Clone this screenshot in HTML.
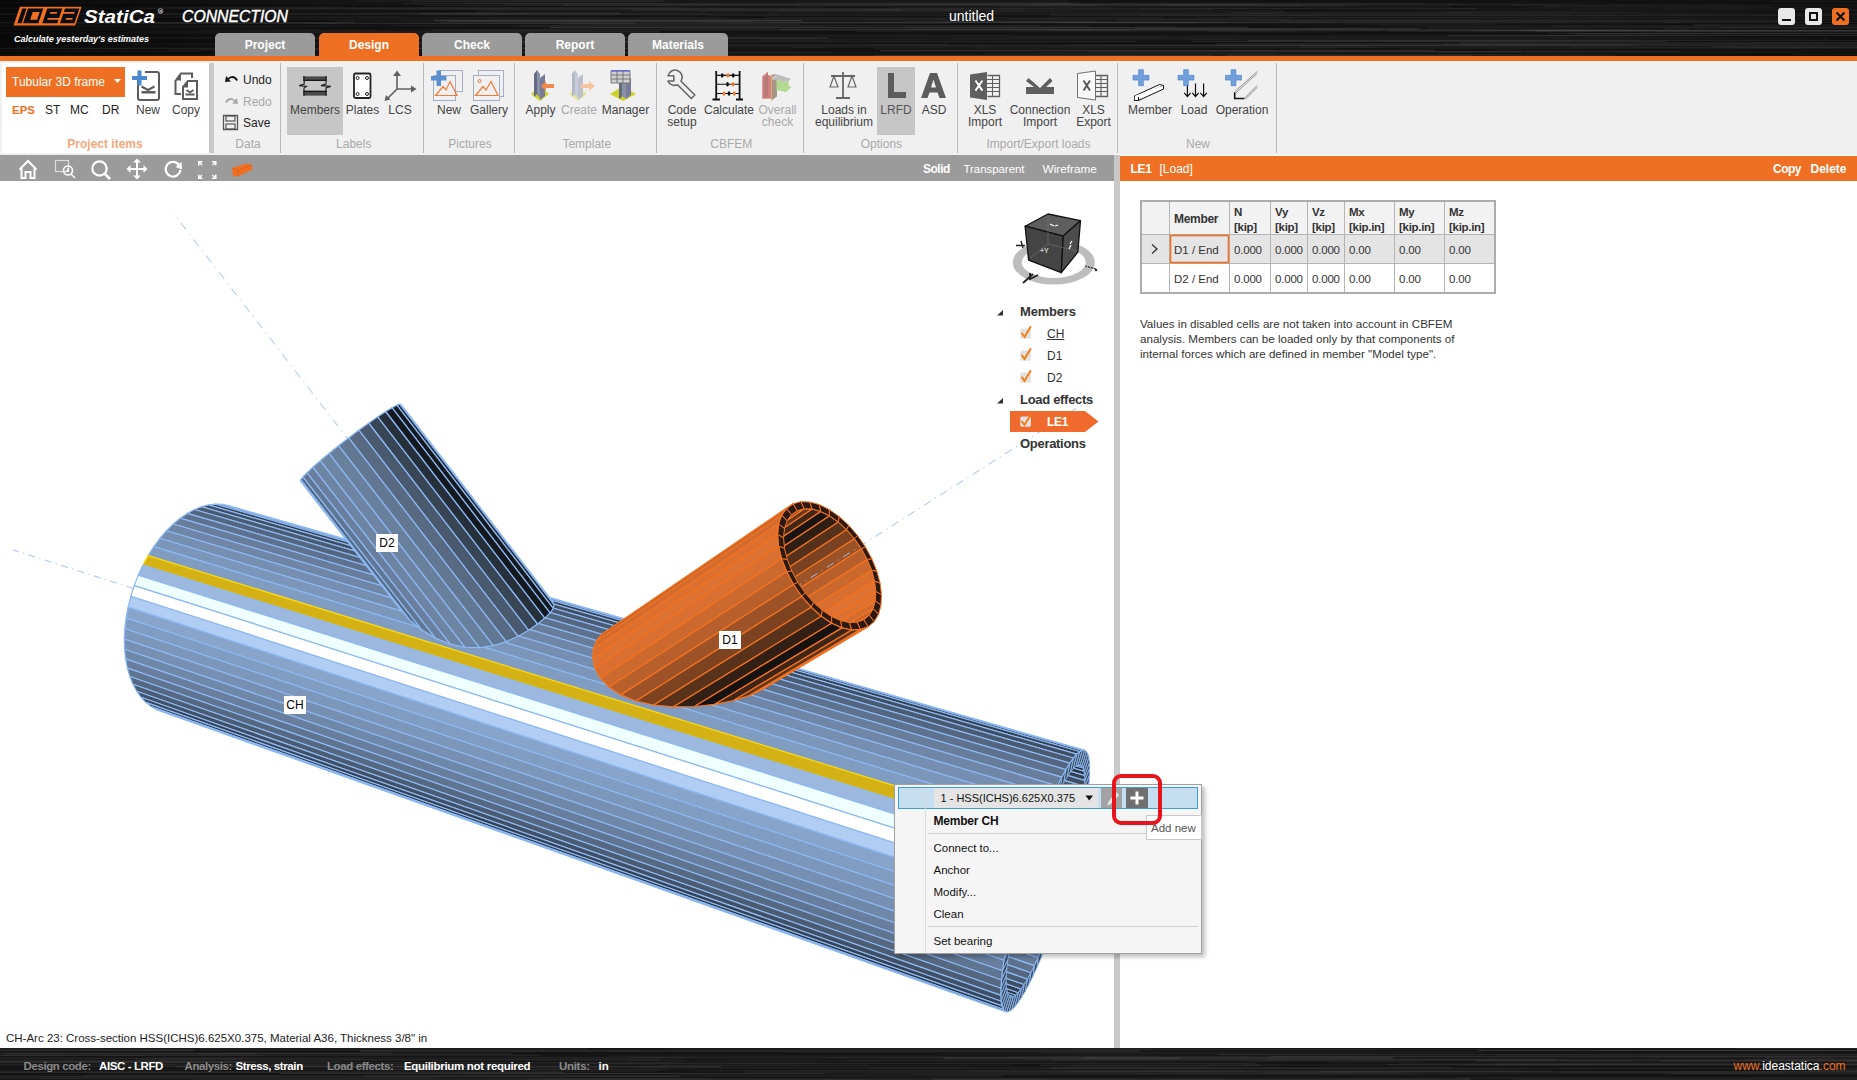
<!DOCTYPE html>
<html><head><meta charset="utf-8">
<style>
*{margin:0;padding:0;box-sizing:border-box}
html,body{width:1857px;height:1080px;overflow:hidden;background:#fff;font-family:"Liberation Sans",sans-serif;position:relative}
.a{position:absolute;white-space:nowrap}
.brushed{background-color:#141414;background-image:repeating-linear-gradient(180deg,rgba(255,255,255,0.05) 0px,rgba(255,255,255,0.0) 1px,rgba(0,0,0,0.2) 2px,rgba(255,255,255,0.07) 3px,rgba(0,0,0,0.1) 5px)}
.tab{position:absolute;top:33px;width:100px;height:23px;background:#9b9b9b;border-radius:5px 5px 0 0;color:#fff;font-weight:bold;font-size:12px;text-align:center;line-height:24px}
.sep{position:absolute;top:63px;width:1px;height:90px;background:#b9b9b9}
.lbl{position:absolute;font-size:12px;color:#333;text-align:center;line-height:12px}
.glbl{position:absolute;top:137px;font-size:12px;color:#a9a9a9;text-align:center}
.dis{color:#a0a0a0}
</style></head><body>
<!-- TITLE BAR -->
<div class="a" style="left:0;top:0;width:1857px;height:56px;background:#121212"></div><svg class="a" style="left:0;top:0" width="1857" height="56"><path d="M1528 7.5h723" stroke="rgb(71,71,71)" stroke-opacity="0.14" stroke-width="1.2"/><path d="M519 26.4h307" stroke="rgb(86,86,86)" stroke-opacity="0.11" stroke-width="1.2"/><path d="M1344 24.2h152" stroke="rgb(83,83,83)" stroke-opacity="0.18" stroke-width="0.8"/><path d="M-79 33.1h388" stroke="rgb(56,56,56)" stroke-opacity="0.11" stroke-width="0.6"/><path d="M522 52.6h312" stroke="rgb(82,82,82)" stroke-opacity="0.31" stroke-width="0.8"/><path d="M1726 42.8h565" stroke="rgb(77,77,77)" stroke-opacity="0.17" stroke-width="0.8"/><path d="M1754 42.6h845" stroke="rgb(81,81,81)" stroke-opacity="0.34" stroke-width="0.6"/><path d="M1841 10.4h795" stroke="rgb(62,62,62)" stroke-opacity="0.32" stroke-width="1.2"/><path d="M1663 28.4h292" stroke="rgb(73,73,73)" stroke-opacity="0.27" stroke-width="1.2"/><path d="M790 47.4h592" stroke="rgb(57,57,57)" stroke-opacity="0.24" stroke-width="1.2"/><path d="M73 23.2h562" stroke="rgb(99,99,99)" stroke-opacity="0.32" stroke-width="1"/><path d="M1132 4.8h231" stroke="rgb(65,65,65)" stroke-opacity="0.25" stroke-width="1.2"/><path d="M1281 20.7h502" stroke="rgb(74,74,74)" stroke-opacity="0.30" stroke-width="1.2"/><path d="M64 36.2h320" stroke="rgb(55,55,55)" stroke-opacity="0.32" stroke-width="0.8"/><path d="M442 22.6h786" stroke="rgb(77,77,77)" stroke-opacity="0.23" stroke-width="1"/><path d="M1013 36.9h697" stroke="rgb(79,79,79)" stroke-opacity="0.32" stroke-width="0.8"/><path d="M911 29.0h470" stroke="rgb(58,58,58)" stroke-opacity="0.24" stroke-width="1"/><path d="M131 31.9h529" stroke="rgb(86,86,86)" stroke-opacity="0.34" stroke-width="1.2"/><path d="M861 19.4h618" stroke="rgb(94,94,94)" stroke-opacity="0.20" stroke-width="0.6"/><path d="M1070 45.1h563" stroke="rgb(66,66,66)" stroke-opacity="0.34" stroke-width="1"/><path d="M1735 1.8h203" stroke="rgb(110,110,110)" stroke-opacity="0.11" stroke-width="0.6"/><path d="M307 42.2h351" stroke="rgb(106,106,106)" stroke-opacity="0.28" stroke-width="1"/><path d="M61 16.3h341" stroke="rgb(65,65,65)" stroke-opacity="0.29" stroke-width="1"/><path d="M395 25.5h505" stroke="rgb(56,56,56)" stroke-opacity="0.19" stroke-width="1"/><path d="M106 23.6h232" stroke="rgb(101,101,101)" stroke-opacity="0.24" stroke-width="0.8"/><path d="M631 54.1h882" stroke="rgb(69,69,69)" stroke-opacity="0.11" stroke-width="0.8"/><path d="M1770 2.0h484" stroke="rgb(87,87,87)" stroke-opacity="0.29" stroke-width="0.8"/><path d="M1061 54.7h671" stroke="rgb(83,83,83)" stroke-opacity="0.17" stroke-width="0.6"/><path d="M942 22.1h391" stroke="rgb(95,95,95)" stroke-opacity="0.22" stroke-width="1"/><path d="M158 7.0h186" stroke="rgb(59,59,59)" stroke-opacity="0.34" stroke-width="1"/><path d="M343 51.4h269" stroke="rgb(91,91,91)" stroke-opacity="0.17" stroke-width="0.6"/><path d="M1535 31.4h593" stroke="rgb(68,68,68)" stroke-opacity="0.37" stroke-width="1.2"/><path d="M1572 9.6h880" stroke="rgb(100,100,100)" stroke-opacity="0.28" stroke-width="0.6"/><path d="M448 21.2h304" stroke="rgb(98,98,98)" stroke-opacity="0.36" stroke-width="0.8"/><path d="M1723 27.6h443" stroke="rgb(87,87,87)" stroke-opacity="0.24" stroke-width="1"/><path d="M568 34.3h361" stroke="rgb(65,65,65)" stroke-opacity="0.16" stroke-width="1"/><path d="M915 45.4h251" stroke="rgb(82,82,82)" stroke-opacity="0.17" stroke-width="0.6"/><path d="M1711 46.9h408" stroke="rgb(108,108,108)" stroke-opacity="0.29" stroke-width="1.2"/><path d="M849 43.0h199" stroke="rgb(57,57,57)" stroke-opacity="0.13" stroke-width="0.8"/><path d="M861 9.3h351" stroke="rgb(76,76,76)" stroke-opacity="0.27" stroke-width="1"/><path d="M434 20.6h368" stroke="rgb(110,110,110)" stroke-opacity="0.37" stroke-width="1.2"/><path d="M889 7.6h228" stroke="rgb(57,57,57)" stroke-opacity="0.22" stroke-width="1.2"/><path d="M1400 48.5h771" stroke="rgb(76,76,76)" stroke-opacity="0.14" stroke-width="1.2"/><path d="M887 4.3h574" stroke="rgb(72,72,72)" stroke-opacity="0.21" stroke-width="1"/><path d="M1695 31.6h493" stroke="rgb(72,72,72)" stroke-opacity="0.13" stroke-width="0.6"/><path d="M-273 46.4h653" stroke="rgb(60,60,60)" stroke-opacity="0.22" stroke-width="0.6"/><path d="M1394 10.5h590" stroke="rgb(65,65,65)" stroke-opacity="0.14" stroke-width="0.8"/><path d="M43 38.1h784" stroke="rgb(82,82,82)" stroke-opacity="0.36" stroke-width="1.2"/><path d="M871 45.2h764" stroke="rgb(90,90,90)" stroke-opacity="0.17" stroke-width="1.2"/><path d="M148 17.6h388" stroke="rgb(56,56,56)" stroke-opacity="0.10" stroke-width="1"/><path d="M391 40.7h443" stroke="rgb(80,80,80)" stroke-opacity="0.13" stroke-width="1"/><path d="M1792 54.3h234" stroke="rgb(68,68,68)" stroke-opacity="0.32" stroke-width="1.2"/><path d="M259 37.1h556" stroke="rgb(74,74,74)" stroke-opacity="0.16" stroke-width="1"/><path d="M306 4.6h888" stroke="rgb(83,83,83)" stroke-opacity="0.13" stroke-width="1"/><path d="M542 52.7h380" stroke="rgb(75,75,75)" stroke-opacity="0.15" stroke-width="1"/><path d="M-82 13.8h609" stroke="rgb(106,106,106)" stroke-opacity="0.27" stroke-width="0.8"/><path d="M1443 12.3h451" stroke="rgb(72,72,72)" stroke-opacity="0.26" stroke-width="0.6"/><path d="M-254 40.8h157" stroke="rgb(103,103,103)" stroke-opacity="0.33" stroke-width="1.2"/><path d="M1553 26.3h226" stroke="rgb(104,104,104)" stroke-opacity="0.33" stroke-width="0.6"/><path d="M1135 28.5h285" stroke="rgb(64,64,64)" stroke-opacity="0.38" stroke-width="1"/><path d="M1230 17.1h776" stroke="rgb(93,93,93)" stroke-opacity="0.19" stroke-width="0.8"/><path d="M1664 7.9h174" stroke="rgb(75,75,75)" stroke-opacity="0.34" stroke-width="0.8"/><path d="M633 10.0h268" stroke="rgb(100,100,100)" stroke-opacity="0.34" stroke-width="0.8"/><path d="M-161 14.1h873" stroke="rgb(106,106,106)" stroke-opacity="0.22" stroke-width="1"/><path d="M1536 30.3h490" stroke="rgb(80,80,80)" stroke-opacity="0.34" stroke-width="0.8"/><path d="M-247 14.4h635" stroke="rgb(81,81,81)" stroke-opacity="0.38" stroke-width="0.6"/><path d="M466 3.5h254" stroke="rgb(63,63,63)" stroke-opacity="0.15" stroke-width="1"/><path d="M565 22.3h609" stroke="rgb(69,69,69)" stroke-opacity="0.24" stroke-width="0.8"/><path d="M780 29.6h637" stroke="rgb(83,83,83)" stroke-opacity="0.36" stroke-width="0.8"/><path d="M768 13.3h509" stroke="rgb(69,69,69)" stroke-opacity="0.31" stroke-width="1"/><path d="M1656 31.4h838" stroke="rgb(72,72,72)" stroke-opacity="0.38" stroke-width="0.8"/><path d="M-146 2.7h534" stroke="rgb(78,78,78)" stroke-opacity="0.15" stroke-width="0.8"/><path d="M1194 17.5h787" stroke="rgb(78,78,78)" stroke-opacity="0.15" stroke-width="1.2"/><path d="M1547 33.3h822" stroke="rgb(87,87,87)" stroke-opacity="0.27" stroke-width="0.8"/><path d="M621 8.7h856" stroke="rgb(101,101,101)" stroke-opacity="0.32" stroke-width="0.6"/><path d="M549 27.7h628" stroke="rgb(79,79,79)" stroke-opacity="0.25" stroke-width="0.8"/><path d="M1845 30.5h543" stroke="rgb(60,60,60)" stroke-opacity="0.33" stroke-width="0.6"/><path d="M1669 15.0h870" stroke="rgb(63,63,63)" stroke-opacity="0.38" stroke-width="0.6"/><path d="M1694 24.9h878" stroke="rgb(79,79,79)" stroke-opacity="0.37" stroke-width="1.2"/><path d="M1663 22.2h479" stroke="rgb(94,94,94)" stroke-opacity="0.36" stroke-width="0.8"/><path d="M996 6.7h456" stroke="rgb(62,62,62)" stroke-opacity="0.29" stroke-width="1"/><path d="M1317 13.9h153" stroke="rgb(67,67,67)" stroke-opacity="0.25" stroke-width="0.6"/><path d="M1799 1.7h332" stroke="rgb(71,71,71)" stroke-opacity="0.16" stroke-width="1"/><path d="M132 8.3h383" stroke="rgb(103,103,103)" stroke-opacity="0.17" stroke-width="1.2"/><path d="M1444 44.3h880" stroke="rgb(89,89,89)" stroke-opacity="0.20" stroke-width="1.2"/><path d="M1359 47.9h578" stroke="rgb(79,79,79)" stroke-opacity="0.16" stroke-width="0.6"/><path d="M-248 50.6h577" stroke="rgb(55,55,55)" stroke-opacity="0.26" stroke-width="0.8"/><path d="M506 4.2h754" stroke="rgb(82,82,82)" stroke-opacity="0.24" stroke-width="1"/><path d="M398 42.5h243" stroke="rgb(100,100,100)" stroke-opacity="0.23" stroke-width="1"/><path d="M432 30.2h698" stroke="rgb(91,91,91)" stroke-opacity="0.24" stroke-width="1.2"/><path d="M901 21.4h896" stroke="rgb(95,95,95)" stroke-opacity="0.27" stroke-width="0.8"/><path d="M696 55.3h776" stroke="rgb(81,81,81)" stroke-opacity="0.36" stroke-width="1"/><path d="M669 39.4h652" stroke="rgb(67,67,67)" stroke-opacity="0.20" stroke-width="0.6"/><path d="M950 38.0h878" stroke="rgb(76,76,76)" stroke-opacity="0.34" stroke-width="0.6"/><path d="M1309 27.6h630" stroke="rgb(96,96,96)" stroke-opacity="0.19" stroke-width="0.6"/><path d="M1057 22.8h625" stroke="rgb(80,80,80)" stroke-opacity="0.32" stroke-width="0.8"/><path d="M1459 43.0h604" stroke="rgb(77,77,77)" stroke-opacity="0.36" stroke-width="1.2"/><path d="M874 48.9h264" stroke="rgb(108,108,108)" stroke-opacity="0.17" stroke-width="0.8"/><path d="M-202 26.2h533" stroke="rgb(102,102,102)" stroke-opacity="0.27" stroke-width="0.6"/><path d="M1117 19.9h165" stroke="rgb(87,87,87)" stroke-opacity="0.30" stroke-width="0.8"/><path d="M567 38.7h667" stroke="rgb(93,93,93)" stroke-opacity="0.19" stroke-width="0.8"/><path d="M420 13.3h201" stroke="rgb(99,99,99)" stroke-opacity="0.34" stroke-width="1"/><path d="M903 26.2h187" stroke="rgb(74,74,74)" stroke-opacity="0.29" stroke-width="1"/><path d="M1296 19.9h444" stroke="rgb(80,80,80)" stroke-opacity="0.15" stroke-width="1"/><path d="M411 48.5h317" stroke="rgb(94,94,94)" stroke-opacity="0.30" stroke-width="0.6"/><path d="M1573 47.7h452" stroke="rgb(82,82,82)" stroke-opacity="0.36" stroke-width="0.8"/><path d="M110 44.0h619" stroke="rgb(65,65,65)" stroke-opacity="0.35" stroke-width="1.2"/><path d="M1712 32.6h261" stroke="rgb(71,71,71)" stroke-opacity="0.23" stroke-width="0.8"/><path d="M-2 7.8h687" stroke="rgb(78,78,78)" stroke-opacity="0.19" stroke-width="1.2"/><path d="M1249 13.5h689" stroke="rgb(74,74,74)" stroke-opacity="0.13" stroke-width="0.8"/><path d="M762 22.2h225" stroke="rgb(66,66,66)" stroke-opacity="0.12" stroke-width="0.6"/><path d="M167 49.8h176" stroke="rgb(100,100,100)" stroke-opacity="0.25" stroke-width="1.2"/><path d="M1507 19.2h239" stroke="rgb(99,99,99)" stroke-opacity="0.15" stroke-width="0.8"/><path d="M768 22.4h433" stroke="rgb(65,65,65)" stroke-opacity="0.38" stroke-width="0.8"/><path d="M698 45.9h585" stroke="rgb(68,68,68)" stroke-opacity="0.23" stroke-width="1"/><path d="M980 18.5h832" stroke="rgb(60,60,60)" stroke-opacity="0.12" stroke-width="0.6"/><path d="M389 48.0h437" stroke="rgb(92,92,92)" stroke-opacity="0.18" stroke-width="0.8"/><path d="M1598 22.4h719" stroke="rgb(64,64,64)" stroke-opacity="0.33" stroke-width="0.6"/><path d="M13 0.9h649" stroke="rgb(58,58,58)" stroke-opacity="0.27" stroke-width="1"/><path d="M698 7.3h780" stroke="rgb(55,55,55)" stroke-opacity="0.11" stroke-width="0.6"/><path d="M-22 29.4h850" stroke="rgb(104,104,104)" stroke-opacity="0.14" stroke-width="0.6"/><path d="M778 10.6h248" stroke="rgb(72,72,72)" stroke-opacity="0.29" stroke-width="0.8"/><path d="M541 37.1h623" stroke="rgb(71,71,71)" stroke-opacity="0.29" stroke-width="0.8"/><path d="M968 13.7h741" stroke="rgb(66,66,66)" stroke-opacity="0.20" stroke-width="0.6"/><path d="M880 50.7h554" stroke="rgb(100,100,100)" stroke-opacity="0.35" stroke-width="1.2"/><path d="M-149 51.5h350" stroke="rgb(94,94,94)" stroke-opacity="0.31" stroke-width="0.6"/><path d="M1806 14.1h263" stroke="rgb(68,68,68)" stroke-opacity="0.34" stroke-width="0.6"/><path d="M-103 3.0h760" stroke="rgb(85,85,85)" stroke-opacity="0.24" stroke-width="0.6"/><path d="M-213 55.1h549" stroke="rgb(83,83,83)" stroke-opacity="0.29" stroke-width="1.2"/><path d="M1639 42.8h485" stroke="rgb(102,102,102)" stroke-opacity="0.25" stroke-width="0.6"/><path d="M402 14.0h376" stroke="rgb(110,110,110)" stroke-opacity="0.21" stroke-width="1"/><path d="M-20 17.5h746" stroke="rgb(106,106,106)" stroke-opacity="0.14" stroke-width="1"/><path d="M1515 5.3h527" stroke="rgb(68,68,68)" stroke-opacity="0.20" stroke-width="1"/><path d="M544 28.5h822" stroke="rgb(85,85,85)" stroke-opacity="0.13" stroke-width="1.2"/><path d="M905 29.3h783" stroke="rgb(92,92,92)" stroke-opacity="0.30" stroke-width="0.6"/><path d="M1494 50.2h368" stroke="rgb(65,65,65)" stroke-opacity="0.16" stroke-width="1.2"/><path d="M-90 29.2h409" stroke="rgb(91,91,91)" stroke-opacity="0.13" stroke-width="1"/><path d="M1104 45.6h385" stroke="rgb(74,74,74)" stroke-opacity="0.20" stroke-width="1"/><path d="M1315 18.2h526" stroke="rgb(88,88,88)" stroke-opacity="0.14" stroke-width="1"/><path d="M402 51.2h396" stroke="rgb(59,59,59)" stroke-opacity="0.23" stroke-width="1"/><path d="M1669 26.9h846" stroke="rgb(79,79,79)" stroke-opacity="0.34" stroke-width="0.6"/><path d="M1429 51.6h251" stroke="rgb(88,88,88)" stroke-opacity="0.24" stroke-width="1"/><path d="M1216 43.9h710" stroke="rgb(78,78,78)" stroke-opacity="0.39" stroke-width="1"/><path d="M702 22.5h885" stroke="rgb(89,89,89)" stroke-opacity="0.24" stroke-width="0.6"/><path d="M1182 8.3h572" stroke="rgb(62,62,62)" stroke-opacity="0.15" stroke-width="1.2"/><path d="M1037 52.6h759" stroke="rgb(89,89,89)" stroke-opacity="0.29" stroke-width="0.6"/><path d="M-156 11.4h578" stroke="rgb(96,96,96)" stroke-opacity="0.13" stroke-width="0.6"/><path d="M169 44.5h779" stroke="rgb(87,87,87)" stroke-opacity="0.34" stroke-width="0.6"/><path d="M1641 33.1h515" stroke="rgb(106,106,106)" stroke-opacity="0.18" stroke-width="0.8"/><path d="M1567 33.5h820" stroke="rgb(82,82,82)" stroke-opacity="0.23" stroke-width="1"/><path d="M1738 30.5h749" stroke="rgb(101,101,101)" stroke-opacity="0.13" stroke-width="1"/><path d="M-282 22.8h549" stroke="rgb(79,79,79)" stroke-opacity="0.25" stroke-width="1.2"/><path d="M1028 4.3h533" stroke="rgb(92,92,92)" stroke-opacity="0.27" stroke-width="0.6"/><path d="M1831 19.7h155" stroke="rgb(74,74,74)" stroke-opacity="0.30" stroke-width="0.6"/><path d="M1473 30.3h534" stroke="rgb(102,102,102)" stroke-opacity="0.20" stroke-width="1"/><path d="M869 29.4h764" stroke="rgb(88,88,88)" stroke-opacity="0.22" stroke-width="1"/><path d="M-18 25.3h483" stroke="rgb(63,63,63)" stroke-opacity="0.26" stroke-width="0.8"/><path d="M-279 14.2h468" stroke="rgb(97,97,97)" stroke-opacity="0.27" stroke-width="1"/><path d="M307 23.6h644" stroke="rgb(103,103,103)" stroke-opacity="0.29" stroke-width="0.6"/><path d="M1526 51.8h438" stroke="rgb(84,84,84)" stroke-opacity="0.18" stroke-width="1"/><path d="M1538 35.6h726" stroke="rgb(79,79,79)" stroke-opacity="0.23" stroke-width="0.6"/><path d="M12 27.1h261" stroke="rgb(66,66,66)" stroke-opacity="0.34" stroke-width="1"/><path d="M972 48.0h365" stroke="rgb(81,81,81)" stroke-opacity="0.17" stroke-width="1"/><path d="M1191 41.4h475" stroke="rgb(104,104,104)" stroke-opacity="0.36" stroke-width="0.8"/><path d="M760 40.1h879" stroke="rgb(100,100,100)" stroke-opacity="0.22" stroke-width="0.6"/><path d="M1785 7.3h322" stroke="rgb(56,56,56)" stroke-opacity="0.13" stroke-width="0.8"/><path d="M1754 26.9h449" stroke="rgb(101,101,101)" stroke-opacity="0.15" stroke-width="0.6"/><path d="M1020 5.0h897" stroke="rgb(90,90,90)" stroke-opacity="0.17" stroke-width="1.2"/><path d="M1741 19.4h877" stroke="rgb(61,61,61)" stroke-opacity="0.31" stroke-width="1.2"/><path d="M1299 46.8h896" stroke="rgb(98,98,98)" stroke-opacity="0.18" stroke-width="1.2"/><path d="M1219 45.1h186" stroke="rgb(68,68,68)" stroke-opacity="0.29" stroke-width="0.6"/><path d="M-33 48.5h485" stroke="rgb(98,98,98)" stroke-opacity="0.24" stroke-width="1.2"/><path d="M1542 6.5h229" stroke="rgb(79,79,79)" stroke-opacity="0.28" stroke-width="0.8"/><path d="M256 9.4h707" stroke="rgb(89,89,89)" stroke-opacity="0.19" stroke-width="1.2"/><path d="M1448 35.5h835" stroke="rgb(105,105,105)" stroke-opacity="0.32" stroke-width="1"/><path d="M-78 48.2h718" stroke="rgb(101,101,101)" stroke-opacity="0.29" stroke-width="1"/><path d="M1049 3.2h375" stroke="rgb(108,108,108)" stroke-opacity="0.13" stroke-width="1"/><path d="M231 15.1h261" stroke="rgb(71,71,71)" stroke-opacity="0.16" stroke-width="0.6"/><path d="M1014 29.8h262" stroke="rgb(81,81,81)" stroke-opacity="0.18" stroke-width="1.2"/><path d="M276 38.9h311" stroke="rgb(78,78,78)" stroke-opacity="0.27" stroke-width="0.8"/><path d="M1007 19.0h286" stroke="rgb(92,92,92)" stroke-opacity="0.30" stroke-width="0.8"/><path d="M403 3.3h668" stroke="rgb(96,96,96)" stroke-opacity="0.32" stroke-width="0.8"/><path d="M765 17.7h398" stroke="rgb(63,63,63)" stroke-opacity="0.35" stroke-width="1"/><path d="M1070 12.6h772" stroke="rgb(58,58,58)" stroke-opacity="0.27" stroke-width="0.6"/><path d="M130 12.7h576" stroke="rgb(74,74,74)" stroke-opacity="0.22" stroke-width="0.6"/><path d="M1472 43.3h767" stroke="rgb(69,69,69)" stroke-opacity="0.13" stroke-width="0.8"/><path d="M1050 15.7h796" stroke="rgb(72,72,72)" stroke-opacity="0.27" stroke-width="1.2"/><path d="M411 1.3h255" stroke="rgb(71,71,71)" stroke-opacity="0.36" stroke-width="0.8"/><path d="M-212 38.1h208" stroke="rgb(101,101,101)" stroke-opacity="0.39" stroke-width="1"/><path d="M281 17.8h187" stroke="rgb(56,56,56)" stroke-opacity="0.13" stroke-width="1.2"/><path d="M1253 20.8h668" stroke="rgb(61,61,61)" stroke-opacity="0.29" stroke-width="1"/><path d="M1616 0.4h869" stroke="rgb(62,62,62)" stroke-opacity="0.20" stroke-width="0.8"/><path d="M1577 33.9h454" stroke="rgb(98,98,98)" stroke-opacity="0.27" stroke-width="1.2"/><path d="M856 31.6h445" stroke="rgb(69,69,69)" stroke-opacity="0.28" stroke-width="0.8"/><path d="M797 3.0h281" stroke="rgb(68,68,68)" stroke-opacity="0.36" stroke-width="1"/><path d="M240 30.6h353" stroke="rgb(88,88,88)" stroke-opacity="0.17" stroke-width="0.8"/><path d="M-76 22.6h430" stroke="rgb(96,96,96)" stroke-opacity="0.38" stroke-width="1"/><path d="M1520 30.5h692" stroke="rgb(98,98,98)" stroke-opacity="0.27" stroke-width="1"/><path d="M-15 24.9h206" stroke="rgb(92,92,92)" stroke-opacity="0.15" stroke-width="0.8"/><path d="M1428 27.1h726" stroke="rgb(78,78,78)" stroke-opacity="0.36" stroke-width="0.8"/><path d="M1415 8.7h775" stroke="rgb(80,80,80)" stroke-opacity="0.14" stroke-width="0.8"/><path d="M1138 15.1h750" stroke="rgb(93,93,93)" stroke-opacity="0.37" stroke-width="0.6"/><path d="M1087 51.5h435" stroke="rgb(90,90,90)" stroke-opacity="0.37" stroke-width="0.6"/><path d="M1381 25.7h599" stroke="rgb(82,82,82)" stroke-opacity="0.18" stroke-width="1"/><path d="M1007 22.9h190" stroke="rgb(85,85,85)" stroke-opacity="0.32" stroke-width="0.6"/><path d="M1494 45.5h591" stroke="rgb(88,88,88)" stroke-opacity="0.24" stroke-width="1"/><path d="M1389 30.9h576" stroke="rgb(96,96,96)" stroke-opacity="0.20" stroke-width="1.2"/><path d="M229 45.9h756" stroke="rgb(70,70,70)" stroke-opacity="0.13" stroke-width="1"/><path d="M-49 48.8h180" stroke="rgb(100,100,100)" stroke-opacity="0.20" stroke-width="1"/><path d="M1050 14.2h824" stroke="rgb(58,58,58)" stroke-opacity="0.28" stroke-width="1.2"/><path d="M334 21.1h762" stroke="rgb(83,83,83)" stroke-opacity="0.33" stroke-width="0.8"/><path d="M819 35.6h192" stroke="rgb(98,98,98)" stroke-opacity="0.14" stroke-width="0.8"/><path d="M1050 30.4h821" stroke="rgb(103,103,103)" stroke-opacity="0.30" stroke-width="0.6"/><path d="M151 26.9h624" stroke="rgb(66,66,66)" stroke-opacity="0.22" stroke-width="0.8"/><path d="M424 5.6h877" stroke="rgb(97,97,97)" stroke-opacity="0.17" stroke-width="1.2"/><path d="M497 41.6h639" stroke="rgb(97,97,97)" stroke-opacity="0.31" stroke-width="0.8"/><path d="M560 24.2h240" stroke="rgb(86,86,86)" stroke-opacity="0.36" stroke-width="0.8"/><path d="M511 8.4h232" stroke="rgb(56,56,56)" stroke-opacity="0.29" stroke-width="0.8"/><path d="M513 25.7h527" stroke="rgb(107,107,107)" stroke-opacity="0.19" stroke-width="0.8"/><path d="M832 8.6h229" stroke="rgb(71,71,71)" stroke-opacity="0.11" stroke-width="1.2"/><path d="M1220 45.4h745" stroke="rgb(69,69,69)" stroke-opacity="0.26" stroke-width="1.2"/><path d="M874 55.5h337" stroke="rgb(82,82,82)" stroke-opacity="0.36" stroke-width="0.8"/><path d="M216 19.2h731" stroke="rgb(90,90,90)" stroke-opacity="0.37" stroke-width="0.8"/><path d="M-253 21.0h313" stroke="rgb(70,70,70)" stroke-opacity="0.33" stroke-width="0.8"/><path d="M1190 39.2h640" stroke="rgb(89,89,89)" stroke-opacity="0.13" stroke-width="1.2"/><path d="M-43 43.7h633" stroke="rgb(79,79,79)" stroke-opacity="0.13" stroke-width="0.6"/><path d="M733 35.9h884" stroke="rgb(70,70,70)" stroke-opacity="0.32" stroke-width="0.6"/><path d="M373 53.5h359" stroke="rgb(81,81,81)" stroke-opacity="0.15" stroke-width="0.8"/><path d="M1226 55.2h389" stroke="rgb(89,89,89)" stroke-opacity="0.28" stroke-width="1.2"/><path d="M1207 31.0h674" stroke="rgb(106,106,106)" stroke-opacity="0.16" stroke-width="1"/><path d="M27 20.2h575" stroke="rgb(109,109,109)" stroke-opacity="0.15" stroke-width="0.6"/><path d="M425 40.9h257" stroke="rgb(71,71,71)" stroke-opacity="0.17" stroke-width="1.2"/><path d="M709 15.6h262" stroke="rgb(63,63,63)" stroke-opacity="0.37" stroke-width="0.8"/><path d="M1429 11.0h553" stroke="rgb(67,67,67)" stroke-opacity="0.26" stroke-width="0.8"/><path d="M895 32.3h443" stroke="rgb(67,67,67)" stroke-opacity="0.13" stroke-width="0.6"/><path d="M1139 8.6h173" stroke="rgb(80,80,80)" stroke-opacity="0.21" stroke-width="0.8"/><path d="M-21 33.1h554" stroke="rgb(59,59,59)" stroke-opacity="0.36" stroke-width="1.2"/><path d="M137 7.8h689" stroke="rgb(80,80,80)" stroke-opacity="0.20" stroke-width="0.8"/><path d="M1230 12.6h411" stroke="rgb(89,89,89)" stroke-opacity="0.19" stroke-width="1"/><path d="M700 11.7h368" stroke="rgb(106,106,106)" stroke-opacity="0.28" stroke-width="0.6"/><path d="M1328 34.5h341" stroke="rgb(58,58,58)" stroke-opacity="0.12" stroke-width="1"/><path d="M-14 9.0h842" stroke="rgb(107,107,107)" stroke-opacity="0.13" stroke-width="1.2"/><path d="M230 35.5h306" stroke="rgb(87,87,87)" stroke-opacity="0.22" stroke-width="0.8"/><path d="M528 45.9h842" stroke="rgb(63,63,63)" stroke-opacity="0.34" stroke-width="1"/><path d="M1248 40.6h756" stroke="rgb(103,103,103)" stroke-opacity="0.27" stroke-width="1.2"/><path d="M198 30.5h178" stroke="rgb(65,65,65)" stroke-opacity="0.29" stroke-width="0.8"/><path d="M1787 47.9h727" stroke="rgb(81,81,81)" stroke-opacity="0.22" stroke-width="1.2"/><path d="M1493 5.5h247" stroke="rgb(90,90,90)" stroke-opacity="0.11" stroke-width="0.6"/><path d="M550 27.4h698" stroke="rgb(107,107,107)" stroke-opacity="0.36" stroke-width="0.8"/><path d="M1163 5.3h182" stroke="rgb(82,82,82)" stroke-opacity="0.34" stroke-width="0.8"/><path d="M984 53.6h293" stroke="rgb(87,87,87)" stroke-opacity="0.21" stroke-width="1"/><path d="M476 11.0h808" stroke="rgb(103,103,103)" stroke-opacity="0.32" stroke-width="0.6"/><path d="M-188 19.1h183" stroke="rgb(94,94,94)" stroke-opacity="0.15" stroke-width="0.8"/><path d="M1724 47.8h502" stroke="rgb(92,92,92)" stroke-opacity="0.24" stroke-width="1.2"/><path d="M563 5.2h534" stroke="rgb(91,91,91)" stroke-opacity="0.29" stroke-width="1.2"/><path d="M460 15.0h871" stroke="rgb(58,58,58)" stroke-opacity="0.26" stroke-width="1.2"/><path d="M357 1.0h712" stroke="rgb(105,105,105)" stroke-opacity="0.15" stroke-width="1"/><path d="M1010 3.7h743" stroke="rgb(78,78,78)" stroke-opacity="0.22" stroke-width="0.6"/><path d="M-55 32.2h580" stroke="rgb(55,55,55)" stroke-opacity="0.13" stroke-width="1"/><path d="M495 18.9h563" stroke="rgb(95,95,95)" stroke-opacity="0.21" stroke-width="0.6"/></svg>
<div class="a" style="left:0;top:0;width:1857px;height:56px;background:linear-gradient(90deg,rgba(0,0,0,0.55) 0px,rgba(0,0,0,0.25) 250px,rgba(0,0,0,0) 500px,rgba(0,0,0,0) 1500px,rgba(0,0,0,0.3) 1857px)"></div>
<div class="a" style="left:0;top:56px;width:1857px;height:5px;background:#f07023"></div>
<div id="tabs">
<div class="tab" style="left:215px">Project</div>
<div class="tab" style="left:319px;background:#f07023">Design</div>
<div class="tab" style="left:422px">Check</div>
<div class="tab" style="left:525px">Report</div>
<div class="tab" style="left:628px">Materials</div>
</div>
<div class="a" style="left:949px;top:7.5px;font-size:14px;color:#fff">untitled</div>

<!-- LOGO -->
<svg class="a" style="left:0;top:0" width="300" height="50">
<path d="M13.55 25.40L75.25 25.40L81.61 6.70L19.91 6.70Z" fill="#f07023"/><path d="M17.30 23.20L21.60 23.20L26.60 8.50L22.30 8.50ZM23.00 23.20L38.30 23.20L43.30 8.50L28.00 8.50ZM42.30 23.20L57.30 23.20L62.30 8.50L47.30 8.50ZM60.00 23.20L74.40 23.20L79.40 8.50L65.00 8.50Z" fill="#0c0c0c"/><path d="M30.16 19.80L37.06 19.80L39.71 12.00L32.81 12.00ZM49.80 13.80L56.70 13.80L57.31 12.00L50.41 12.00ZM47.16 19.80L59.16 19.80L59.77 18.00L47.77 18.00ZM62.20 13.80L74.20 13.80L74.81 12.00L62.81 12.00ZM65.46 19.80L72.16 19.80L72.77 18.00L66.07 18.00Z" fill="#f07023"/>
<text x="84" y="22.5" font-family="Liberation Sans" font-weight="bold" font-style="italic" font-size="19" fill="#fff" textLength="71" lengthAdjust="spacingAndGlyphs">StatiCa</text>
<circle cx="160.5" cy="11" r="2.4" fill="none" stroke="#ccc" stroke-width="0.7"/><text x="159.2" y="12.6" font-family="Liberation Sans" font-weight="bold" font-size="4" fill="#ccc">R</text>
<text x="182" y="22" font-family="Liberation Sans" font-style="italic" font-size="16" fill="#fff" textLength="106" stroke="#fff" stroke-width="0.4" lengthAdjust="spacingAndGlyphs">CONNECTION</text>
<text x="14" y="42" font-family="Liberation Sans" font-style="italic" font-weight="bold" font-size="9.5" fill="#fff" textLength="135" lengthAdjust="spacingAndGlyphs">Calculate yesterday's estimates</text>
</svg>
<!-- WINDOW BUTTONS -->
<div class="a" style="left:1778px;top:8px;width:17px;height:17px;background:#e8e8e8;border-radius:3px"></div>
<div class="a" style="left:1782px;top:19px;width:9px;height:2px;background:#111"></div>
<div class="a" style="left:1805px;top:8px;width:17px;height:17px;background:#e8e8e8;border-radius:3px"></div>
<div class="a" style="left:1809px;top:12px;width:9px;height:9px;border:2px solid #111"></div>
<div class="a" style="left:1832px;top:8px;width:17px;height:17px;background:#f07023;border-radius:3px"></div>
<svg class="a" style="left:1832px;top:8px" width="17" height="17"><path d="M4.5 4.5L12.5 12.5M12.5 4.5L4.5 12.5" stroke="#111" stroke-width="2.2"/></svg>
<!-- RIBBON -->
<div class="a" style="left:0;top:61px;width:1857px;height:94px;background:#f0f0f0"></div>
<div class="a" style="left:2px;top:63px;width:207px;height:90px;background:#fff"></div>
<div class="a" style="left:209px;top:63px;width:5px;height:90px;background:#c8c8c8"></div>

<!-- RIBBON CONTENT -->
<div class="a" style="left:6px;top:67px;width:119px;height:30px;background:#f07023"></div>
<div class="a" style="left:12px;top:75px;font-size:12px;line-height:14px;color:#fff">Tubular 3D frame</div>
<svg class="a" style="left:114px;top:79px" width="7" height="4"><path d="M0 0H7L3.5 4Z" fill="#fff"/></svg>
<div class="a" style="left:12px;top:104px;font-size:12px;line-height:12px;color:#f07023;font-weight:bold;font-size:11.5px">EPS</div>
<div class="a" style="left:45px;top:104px;font-size:12px;line-height:12px;color:#222">ST</div>
<div class="a" style="left:70px;top:104px;font-size:12px;line-height:12px;color:#222">MC</div>
<div class="a" style="left:102px;top:104px;font-size:12px;line-height:12px;color:#222">DR</div>
<div class="a" style="left:287px;top:67px;width:56px;height:68px;background:#c6c6c6"></div>
<div class="a" style="left:877px;top:67px;width:38px;height:68px;background:#c6c6c6"></div>
<div class="lbl" style="left:108px;top:104px;width:80px;color:#444">New</div>
<div class="lbl" style="left:146px;top:104px;width:80px;color:#444">Copy</div>
<div class="lbl" style="left:275px;top:104px;width:80px;color:#444">Members</div>
<div class="lbl" style="left:322.5px;top:104px;width:80px;color:#444">Plates</div>
<div class="lbl" style="left:360px;top:104px;width:80px;color:#444">LCS</div>
<div class="lbl" style="left:409px;top:104px;width:80px;color:#444">New</div>
<div class="lbl" style="left:449px;top:104px;width:80px;color:#444">Gallery</div>
<div class="lbl" style="left:500.5px;top:104px;width:80px;color:#444">Apply</div>
<div class="lbl" style="left:539px;top:104px;width:80px;color:#a8a8a8">Create</div>
<div class="lbl" style="left:585.5px;top:104px;width:80px;color:#444">Manager</div>
<div class="lbl" style="left:642px;top:104px;width:80px;color:#444">Code<br>setup</div>
<div class="lbl" style="left:689px;top:104px;width:80px;color:#444">Calculate</div>
<div class="lbl" style="left:737.5px;top:104px;width:80px;color:#a8a8a8">Overall<br>check</div>
<div class="lbl" style="left:804px;top:104px;width:80px;color:#444">Loads in<br>equilibrium</div>
<div class="lbl" style="left:856px;top:104px;width:80px;color:#555">LRFD</div>
<div class="lbl" style="left:894px;top:104px;width:80px;color:#444">ASD</div>
<div class="lbl" style="left:945px;top:104px;width:80px;color:#444">XLS<br>Import</div>
<div class="lbl" style="left:1000px;top:104px;width:80px;color:#444">Connection<br>Import</div>
<div class="lbl" style="left:1053.5px;top:104px;width:80px;color:#444">XLS<br>Export</div>
<div class="lbl" style="left:1110px;top:104px;width:80px;color:#444">Member</div>
<div class="lbl" style="left:1154px;top:104px;width:80px;color:#444">Load</div>
<div class="lbl" style="left:1202px;top:104px;width:80px;color:#444">Operation</div>
<div class="lbl" style="left:45px;top:138px;width:120px;color:#f5a77a;font-size:12px;font-weight:bold">Project items</div>
<div class="lbl" style="left:188px;top:138px;width:120px;color:#a9a9a9;font-size:12px">Data</div>
<div class="lbl" style="left:293.75px;top:138px;width:120px;color:#a9a9a9;font-size:12px">Labels</div>
<div class="lbl" style="left:410px;top:138px;width:120px;color:#a9a9a9;font-size:12px">Pictures</div>
<div class="lbl" style="left:526.75px;top:138px;width:120px;color:#a9a9a9;font-size:12px">Template</div>
<div class="lbl" style="left:671.25px;top:138px;width:120px;color:#a9a9a9;font-size:12px">CBFEM</div>
<div class="lbl" style="left:821.4px;top:138px;width:120px;color:#a9a9a9;font-size:12px">Options</div>
<div class="lbl" style="left:978.5px;top:138px;width:120px;color:#a9a9a9;font-size:12px">Import/Export loads</div>
<div class="lbl" style="left:1138px;top:138px;width:120px;color:#a9a9a9;font-size:12px">New</div>
<div class="lbl" style="left:243px;top:73.5px;text-align:left;color:#222">Undo</div>
<div class="lbl" style="left:243px;top:95.5px;text-align:left;color:#a8a8a8">Redo</div>
<div class="lbl" style="left:243px;top:117px;text-align:left;color:#222">Save</div>
<div class="sep" style="left:280px"></div>
<div class="sep" style="left:423px"></div>
<div class="sep" style="left:514px"></div>
<div class="sep" style="left:656px"></div>
<div class="sep" style="left:803px"></div>
<div class="sep" style="left:957px"></div>
<div class="sep" style="left:1117px"></div>
<div class="sep" style="left:1276px"></div>

<svg class="a" style="left:0;top:0" width="1300" height="155" viewBox="0 0 1300 155">
<!-- New (project) -->
<g fill="none" stroke="#5c5c5c" stroke-width="2"><path d="M138 80V98a2 2 0 0 0 2 2H157a2 2 0 0 0 2-2V74a2 2 0 0 0-2-2H145"/></g>
<path d="M141.5 86.5L148 90L154.5 86.5" fill="none" stroke="#5c5c5c" stroke-width="2"/><rect x="141.5" y="91" width="14" height="2.5" fill="#5c5c5c"/>
<path d="M137.5 70.5h4v5.5h5.5v4h-5.5v5.5h-4v-5.5h-5.5v-4h5.5z" fill="#4a88d0"/>
<!-- Copy -->
<path d="M176 80L181 73.5H192V78" fill="none" stroke="#5c5c5c" stroke-width="2"/><path d="M175.5 80V94H181" fill="none" stroke="#5c5c5c" stroke-width="2"/>
<path d="M175 80.5L181 73V80.5Z" fill="#5c5c5c"/>
<path d="M183 87L188 81H197V99H183Z" fill="#fff" stroke="#5c5c5c" stroke-width="2"/>
<path d="M182 87.5L188 80V87.5Z" fill="#5c5c5c"/>
<path d="M186.5 90L190 92.5L193.5 90" fill="none" stroke="#5c5c5c" stroke-width="1.8"/><rect x="185.5" y="93.5" width="9" height="2" fill="#5c5c5c"/>
<!-- Undo / Redo / Save -->
<path d="M225 82L226 76L228 78Q234 73 238 80L236.5 81Q233 76 229 79.5L231 81.5Z" fill="#1a1a1a"/>
<path d="M238 104L237 98L235 100Q229 95 225 102L226.5 103Q230 98 234 101.5L232 103.5Z" fill="#a8a8a8"/>
<path d="M223.5 115.5H237.5V129.5H223.5Z" fill="none" stroke="#555" stroke-width="1.3"/><rect x="226" y="116" width="9" height="5" fill="none" stroke="#555" stroke-width="1.2"/><rect x="226" y="124" width="9" height="5" fill="none" stroke="#555" stroke-width="1.2"/>
<!-- Members -->
<rect x="303.3" y="76.4" width="23.4" height="4.4" fill="#4a4a4a"/><rect x="303.3" y="90.8" width="23.4" height="4.8" fill="#4a4a4a"/>
<path d="M303.3 80.3H326.7M303.3 91.3H326.7" stroke="#050505" stroke-width="1"/>
<path d="M304 76V81M326 76V81M304 90.5V95.8M326 90.5V95.8" stroke="#222" stroke-width="1.3"/>
<path d="M304.2 81V84L299.2 85.6L306.5 86.4L304 88V91M326 81V84L321 85.6L330.8 86.4L326 88V91" fill="none" stroke="#1a1a1a" stroke-width="1.1" stroke-linejoin="miter"/>
<!-- Plates -->
<rect x="354" y="73.5" width="16.5" height="24.5" rx="1.5" fill="#fff" stroke="#222" stroke-width="1.8"/>
<g fill="none" stroke="#222" stroke-width="1"><circle cx="357.6" cy="78" r="1.5"/><circle cx="367" cy="78" r="1.5"/><circle cx="357.6" cy="94" r="1.5"/><circle cx="367" cy="94" r="1.5"/></g>
<!-- LCS -->
<g stroke="#606060" stroke-width="1.6" fill="none"><path d="M397 74V89H413M397 89L387 99"/></g>
<g fill="#606060"><path d="M393 76L397 70.5L401 76Z"/><path d="M411 85.5L416.5 89L411 92.5Z"/><path d="M384.5 101L386 95L390.5 99.5Z"/></g>
<!-- Pictures New -->
<g fill="none" stroke="#a3aec0" stroke-width="1"><rect x="439.5" y="70.5" width="23" height="21"/><rect x="433.5" y="75.5" width="22" height="25" fill="#f0f0f0"/></g>
<path d="M435.5 95.5L443 86.5L446 90L450 81.5L457 95.5Z" fill="none" stroke="#f07a3a" stroke-width="1.2"/>
<path d="M436.5 70.5h4.5v5.5h5.5v4.5h-5.5v5.5h-4.5v-5.5h-5.5v-4.5h5.5z" fill="#5b8fd0"/>
<!-- Gallery -->
<g fill="none" stroke="#a3aec0" stroke-width="1"><rect x="478.5" y="70.5" width="25" height="26"/><rect x="473.5" y="75.5" width="26" height="25" fill="#f0f0f0"/></g>
<path d="M475.5 95.5L483 86.5L486 90L491 81.5L498 95.5Z" fill="none" stroke="#f07a3a" stroke-width="1.2"/><circle cx="479.5" cy="81" r="1.5" fill="none" stroke="#f07a3a" stroke-width="1"/>
<!-- Apply -->
<path d="M531 94L540 86L549 94L540 101Z" fill="#cfd12a"/>
<path d="M534 74L537 70V94L534 97Z" fill="#666c80"/><path d="M537 70L540 74V98L537 95Z" fill="#8a90a8"/><path d="M540 78L545 74V96L540 100Z" fill="#777d98"/>
<path d="M541 86L546 81V84H554V88H546V91Z" fill="#f08a4a"/>
<!-- Create -->
<path d="M569 94L578 86L587 94L578 101Z" fill="#e4e6a0"/>
<path d="M572 74L575 70V94L572 97Z" fill="#b4b8c4"/><path d="M575 70L578 74V98L575 95Z" fill="#c8ccd8"/><path d="M578 78L583 74V96L578 100Z" fill="#bcc0cc"/>
<path d="M581 84H589V81L595 86L589 91V88H581Z" fill="#f6c4a0"/>
<!-- Manager -->
<path d="M610 94L623 86L636 94L623 101Z" fill="#cfd12a"/>
<path d="M619 80L622 77V97L619 99Z" fill="#666c80"/><path d="M622 77L626 80V99L622 96Z" fill="#8a90a8"/><path d="M626 82L631 78V95L626 99Z" fill="#777d98"/>
<rect x="611" y="71" width="19" height="12" fill="#cfcfcf" stroke="#666" stroke-width="0.8"/><rect x="611" y="70" width="19" height="1.5" fill="#6a6ae0"/>
<path d="M611 75H630M611 79H630M617 71V83M623 71V83" stroke="#666" stroke-width="0.8"/>
<!-- Code setup -->
<path d="M668 75.8H673.8V81H668A7.2 7.2 0 0 0 677.53 84.77L691.31 98.55L694.85 95.01L681.07 81.23A7.2 7.2 0 1 0 668 75.8Z" fill="none" stroke="#666" stroke-width="1.6" stroke-linejoin="round"/>
<!-- Calculate -->
<g stroke="#111"><path d="M716.2 71V99.5M739.6 71V99.5" stroke-width="1.8"/><path d="M716.2 75.4H739.6M716.2 84.3H739.6M716.2 93.5H739.6" stroke-width="1.1"/><path d="M712.5 99.5H720M736 99.5H743" stroke-width="2"/></g>
<g fill="#111"><ellipse cx="722.2" cy="75.4" rx="1.4" ry="2.2"/><ellipse cx="733.2" cy="75.4" rx="1.4" ry="2.2"/><ellipse cx="727.5" cy="84.3" rx="1.4" ry="2.2"/><ellipse cx="729" cy="93.5" rx="1.4" ry="2.2"/></g>
<g fill="#f07a2a"><ellipse cx="727.9" cy="75.4" rx="1.4" ry="2.2"/><ellipse cx="733" cy="84.3" rx="1.4" ry="2.2"/><ellipse cx="724" cy="93.5" rx="1.4" ry="2.2"/><ellipse cx="734.3" cy="93.5" rx="1.4" ry="2.2"/></g>
<!-- Overall check -->
<path d="M762.2 76.5L768 71.5V74.8L772 76.4V98.5L762.2 98.7Z" fill="#cf8080"/><path d="M764.5 77L768 74.8V96L764.5 98Z" fill="#b87878"/>
<path d="M771.4 78.5L777 74.2L771.4 74.6V100.5L777 96.5V79Z" fill="#a89684"/><path d="M771.4 76V101" stroke="#e8b870" stroke-width="0.8"/>
<path d="M772.5 79L777 74.5L791 78.8L788 81.8L772.5 80Z" fill="#bdbdbd"/>
<path d="M776.5 80.3L788 81.8V86L791 87L786 91.5L776.5 89.5Z" fill="#b5d890"/><path d="M788 81.8V86M776.5 89.5L786 91.5L791 87" stroke="#9be070" stroke-width="0.8" fill="none"/>
<!-- Loads in equilibrium -->
<g stroke="#666" stroke-width="1.8" fill="none"><path d="M843 72V98M836 98H850M831 76H855"/></g>
<g stroke="#666" stroke-width="1.2" fill="none"><path d="M834 76L830 87H838ZM852 76L848 87H856Z"/></g>
<!-- L and A -->
<path d="M888 73H894V92H906V98H888Z" fill="#5c5c5c"/>
<path d="M930 73H937L946 98H939.5L937.5 92.5H929.5L927.5 98H921ZM931 87.5H936L933.5 79.5Z" fill="#5c5c5c" fill-rule="evenodd"/>
<!-- XLS Import -->
<path d="M970 74.5L987 72V100L970 97.5Z" fill="#5f5f5f"/>
<path d="M987.5 75.5H999.5V96.5H987.5" fill="none" stroke="#5f5f5f" stroke-width="1.3"/>
<path d="M987 79.5H999.5M987 83.5H999.5M987 87.5H999.5M987 91.5H999.5M992.5 75V97" stroke="#5f5f5f" stroke-width="1.1"/>
<path d="M975.5 80.5L982.4 90.6M982.4 80.5L975.5 90.6" stroke="#fff" stroke-width="1.9"/>
<!-- Connection Import -->
<path d="M1026 81L1028.5 78L1040 88L1050 78L1052.5 81L1046 87H1054V94H1026V87H1034Z" fill="#5f5f5f"/>
<!-- XLS Export -->
<path d="M1077.5 73.5L1095.5 71V100L1077.5 97.5Z" fill="#f8f8f8" stroke="#707070" stroke-width="1"/>
<path d="M1096 75.5H1107.5V96.5H1096" fill="none" stroke="#5f5f5f" stroke-width="1.3"/>
<path d="M1095.5 79.5H1107.5M1095.5 83.5H1107.5M1095.5 87.5H1107.5M1095.5 91.5H1107.5M1101 75V97" stroke="#5f5f5f" stroke-width="1.1"/>
<path d="M1083.5 80.5L1090 90.6M1090 80.5L1083.5 90.6" stroke="#555" stroke-width="1.9"/>
<!-- Member -->
<path d="M1134.5 96L1159.5 84.5L1163.5 85.5L1138.5 97Z" fill="#fff" stroke="#111" stroke-width="1"/>
<path d="M1134.5 96V100.5H1138.5L1163.5 89V85.5M1138.5 97V100.5" fill="#fff" stroke="#111" stroke-width="1"/>
<rect x="1134.8" y="96.8" width="3" height="3" fill="#fff"/>
<path d="M1138.6 69.7h4.8v5.6h5.6v4.8h-5.6v5.6h-4.8v-5.6h-5.6v-4.8h5.6z" fill="#6f9fdc" stroke="#4a80c8" stroke-width="0.6"/>
<!-- Load -->
<g stroke="#111" stroke-width="1.2" fill="none"><path d="M1187.4 84V96.5M1184.2 92.8L1187.4 96.5L1190.6 92.8M1195.5 83.4V96.5M1192.3 92.8L1195.5 96.5L1198.7 92.8M1203.6 83.4V96.5M1200.4 92.8L1203.6 96.5L1206.8 92.8"/></g>
<path d="M1183.6 69.7h4.8v5.6h5.6v4.8h-5.6v5.6h-4.8v-5.6h-5.6v-4.8h5.6z" fill="#6f9fdc" stroke="#4a80c8" stroke-width="0.6"/>
<!-- Operation -->
<g stroke="#888" stroke-width="0.9" fill="none"><path d="M1235 91.5L1257.3 71.3M1236 92.8L1257.3 73.2M1244.4 98.2L1257.3 85.4M1245.2 99.4L1257.3 87.3"/></g>
<path d="M1234.7 92.3V98.5H1244.4" stroke="#111" stroke-width="1.6" fill="none"/>
<path d="M1231.1 69.7h4.8v5.6h5.6v4.8h-5.6v5.6h-4.8v-5.6h-5.6v-4.8h5.6z" fill="#6f9fdc" stroke="#4a80c8" stroke-width="0.6"/>
</svg>
<!-- VIEWPORT -->
<div class="a" style="left:0;top:155px;width:1114px;height:26px;background:#9b9b9b"></div>
<div class="a" style="left:1114px;top:155px;width:6px;height:893px;background:#c8c8c8"></div>
<div class="a" style="left:1120px;top:156px;width:737px;height:25px;background:#f07023"></div>

<!-- MODEL START -->
<svg class="a" style="left:0;top:181px" width="1114" height="867" viewBox="0 181 1114 867"><line x1="198.8" y1="609.4" x2="13.1" y2="550.0" stroke="#9cc0f4" stroke-width="1" stroke-dasharray="7 4.5 1.2 4.5"/>
<line x1="350.8" y1="442.7" x2="173.3" y2="213.1" stroke="#9cc0f4" stroke-width="1" stroke-dasharray="8.5 5.5 1.2 5.5"/>
<polygon points="167.0,700.3 172.7,701.4 1013.4,996.7 1011.3,997.1" fill="#0e1317" stroke="#8cb8f4" stroke-width="1.2" stroke-linejoin="round"/>
<polygon points="172.7,701.4 178.5,701.6 1015.8,995.2 1013.4,996.7" fill="#1b2229" stroke="#8cb8f4" stroke-width="1.2" stroke-linejoin="round"/>
<polygon points="178.5,701.6 184.4,700.9 1018.4,992.7 1015.8,995.2" fill="#27313c" stroke="#8cb8f4" stroke-width="1.2" stroke-linejoin="round"/>
<polygon points="184.4,700.9 190.5,699.4 1021.3,989.1 1018.4,992.7" fill="#333f4d" stroke="#8cb8f4" stroke-width="1.2" stroke-linejoin="round"/>
<polygon points="190.5,699.4 196.5,697.0 1024.4,984.5 1021.3,989.1" fill="#3f4d5e" stroke="#8cb8f4" stroke-width="1.2" stroke-linejoin="round"/>
<polygon points="196.5,697.0 202.6,693.8 1027.7,979.1 1024.4,984.5" fill="#4a5a6f" stroke="#8cb8f4" stroke-width="1.2" stroke-linejoin="round"/>
<polygon points="202.6,693.8 208.5,689.9 1031.1,972.7 1027.7,979.1" fill="#54667e" stroke="#8cb8f4" stroke-width="1.2" stroke-linejoin="round"/>
<polygon points="208.5,689.9 214.3,685.2 1034.6,965.6 1031.1,972.7" fill="#5e728d" stroke="#8cb8f4" stroke-width="1.2" stroke-linejoin="round"/>
<polygon points="214.3,685.2 220.0,679.9 1038.2,957.7 1034.6,965.6" fill="#677d9a" stroke="#8cb8f4" stroke-width="1.2" stroke-linejoin="round"/>
<polygon points="220.0,679.9 225.4,673.9 1041.9,949.2 1038.2,957.7" fill="#6f86a6" stroke="#8cb8f4" stroke-width="1.2" stroke-linejoin="round"/>
<polygon points="225.4,673.9 230.5,667.4 1045.5,940.2 1041.9,949.2" fill="#768fb0" stroke="#8cb8f4" stroke-width="1.2" stroke-linejoin="round"/>
<polygon points="230.5,667.4 235.3,660.3 1049.2,930.6 1045.5,940.2" fill="#7c96b9" stroke="#8cb8f4" stroke-width="1.2" stroke-linejoin="round"/>
<polygon points="235.3,660.3 239.7,652.9 1052.8,920.7 1049.2,930.6" fill="#819cc0" stroke="#8cb8f4" stroke-width="1.2" stroke-linejoin="round"/>
<polygon points="239.7,652.9 243.8,645.0 1056.4,910.4 1052.8,920.7" fill="#86a2c8" stroke="#8cb8f4" stroke-width="1.2" stroke-linejoin="round"/>
<polygon points="243.8,645.0 247.4,636.9 1059.9,899.9 1056.4,910.4" fill="#a4c0e6" stroke="#8cb8f4" stroke-width="1.2" stroke-linejoin="round"/>
<polygon points="247.4,636.9 250.6,628.5 1063.2,889.2 1059.9,899.9" fill="#fbffff" stroke="#8cb8f4" stroke-width="1.2" stroke-linejoin="round"/>
<polygon points="250.6,628.5 253.3,619.9 1066.4,878.5 1063.2,889.2" fill="#ffffff" stroke="#8cb8f4" stroke-width="1.2" stroke-linejoin="round"/>
<polygon points="253.3,619.9 255.5,611.3 1069.4,867.8 1066.4,878.5" fill="#bbd7fe" stroke="#8cb8f4" stroke-width="1.2" stroke-linejoin="round"/>
<polygon points="255.5,611.3 257.2,602.6 1072.2,857.2 1069.4,867.8" fill="#8aa6cc" stroke="#8cb8f4" stroke-width="1.2" stroke-linejoin="round"/>
<polygon points="257.2,602.6 258.3,594.0 1074.7,846.8 1072.2,857.2" fill="#819dc1" stroke="#8cb8f4" stroke-width="1.2" stroke-linejoin="round"/>
<polygon points="258.3,594.0 258.9,585.4 1077.1,836.7 1074.7,846.8" fill="#7c97ba" stroke="#8cb8f4" stroke-width="1.2" stroke-linejoin="round"/>
<polygon points="258.9,585.4 259.0,577.1 1079.1,826.9 1077.1,836.7" fill="#7790b1" stroke="#8cb8f4" stroke-width="1.2" stroke-linejoin="round"/>
<polygon points="259.0,577.1 258.5,569.1 1080.9,817.6 1079.1,826.9" fill="#7088a7" stroke="#8cb8f4" stroke-width="1.2" stroke-linejoin="round"/>
<polygon points="258.5,569.1 257.4,561.3 1082.4,808.8 1080.9,817.6" fill="#687e9c" stroke="#8cb8f4" stroke-width="1.2" stroke-linejoin="round"/>
<polygon points="257.4,561.3 255.8,554.0 1083.5,800.6 1082.4,808.8" fill="#5f748f" stroke="#8cb8f4" stroke-width="1.2" stroke-linejoin="round"/>
<polygon points="255.8,554.0 253.6,547.2 1084.4,793.1 1083.5,800.6" fill="#556880" stroke="#8cb8f4" stroke-width="1.2" stroke-linejoin="round"/>
<polygon points="253.6,547.2 250.9,540.8 1084.9,786.3 1084.4,793.1" fill="#4b5c71" stroke="#8cb8f4" stroke-width="1.2" stroke-linejoin="round"/>
<polygon points="250.9,540.8 247.7,535.1 1085.0,780.3 1084.9,786.3" fill="#404f61" stroke="#8cb8f4" stroke-width="1.2" stroke-linejoin="round"/>
<polygon points="247.7,535.1 244.0,530.1 1084.8,775.3 1085.0,780.3" fill="#354150" stroke="#8cb8f4" stroke-width="1.2" stroke-linejoin="round"/>
<polygon points="244.0,530.1 239.9,525.7 1084.2,771.2 1084.8,775.3" fill="#29333e" stroke="#8cb8f4" stroke-width="1.2" stroke-linejoin="round"/>
<polygon points="239.9,525.7 235.3,522.1 1083.2,768.0 1084.2,771.2" fill="#1d242c" stroke="#8cb8f4" stroke-width="1.2" stroke-linejoin="round"/>
<polygon points="235.3,522.1 230.3,519.3 1081.9,766.0 1083.2,768.0" fill="#10151a" stroke="#8cb8f4" stroke-width="1.2" stroke-linejoin="round"/>
<polygon points="230.3,519.3 225.0,517.4 1080.2,765.0 1081.9,766.0" fill="#0e1317" stroke="#8cb8f4" stroke-width="1.2" stroke-linejoin="round"/>
<polygon points="1082.3,750.2 1079.6,751.5 1075.9,766.3 1078.2,765.1" fill="#3c4a5a" stroke="#8cb8f4" stroke-width="0.9" stroke-linejoin="round"/>
<polygon points="1079.6,751.5 1076.7,754.1 1073.2,768.7 1075.9,766.3" fill="#3c4a5a" stroke="#8cb8f4" stroke-width="0.9" stroke-linejoin="round"/>
<polygon points="1076.7,754.1 1073.4,758.0 1070.3,772.3 1073.2,768.7" fill="#3c4a5a" stroke="#8cb8f4" stroke-width="0.9" stroke-linejoin="round"/>
<polygon points="1073.4,758.0 1069.8,763.2 1067.1,776.9 1070.3,772.3" fill="#3c4a5a" stroke="#8cb8f4" stroke-width="0.9" stroke-linejoin="round"/>
<polygon points="1069.8,763.2 1065.9,769.6 1063.6,782.6 1067.1,776.9" fill="#3c4a5a" stroke="#8cb8f4" stroke-width="0.9" stroke-linejoin="round"/>
<polygon points="1065.9,769.6 1061.7,777.2 1060.0,789.4 1063.6,782.6" fill="#3c4a5a" stroke="#8cb8f4" stroke-width="0.9" stroke-linejoin="round"/>
<polygon points="1061.7,777.2 1057.4,785.9 1056.2,797.1 1060.0,789.4" fill="#3c4a5a" stroke="#8cb8f4" stroke-width="0.9" stroke-linejoin="round"/>
<polygon points="1057.4,785.9 1053.0,795.7 1052.2,805.8 1056.2,797.1" fill="#3c4a5a" stroke="#8cb8f4" stroke-width="0.9" stroke-linejoin="round"/>
<polygon points="1053.0,795.7 1048.4,806.4 1048.2,815.3 1052.2,805.8" fill="#3c4a5a" stroke="#8cb8f4" stroke-width="0.9" stroke-linejoin="round"/>
<polygon points="1048.4,806.4 1043.8,818.0 1044.1,825.5 1048.2,815.3" fill="#3c4a5a" stroke="#8cb8f4" stroke-width="0.9" stroke-linejoin="round"/>
<polygon points="1043.8,818.0 1039.1,830.3 1040.0,836.4 1044.1,825.5" fill="#3c4a5a" stroke="#8cb8f4" stroke-width="0.9" stroke-linejoin="round"/>
<polygon points="1039.1,830.3 1034.6,843.2 1036.0,847.8 1040.0,836.4" fill="#3c4a5a" stroke="#8cb8f4" stroke-width="0.9" stroke-linejoin="round"/>
<polygon points="1034.6,843.2 1030.1,856.6 1032.1,859.5 1036.0,847.8" fill="#3c4a5a" stroke="#8cb8f4" stroke-width="0.9" stroke-linejoin="round"/>
<polygon points="1030.1,856.6 1025.8,870.2 1028.3,871.5 1032.1,859.5" fill="#3c4a5a" stroke="#8cb8f4" stroke-width="0.9" stroke-linejoin="round"/>
<polygon points="1025.8,870.2 1021.7,884.0 1024.7,883.6 1028.3,871.5" fill="#3c4a5a" stroke="#8cb8f4" stroke-width="0.9" stroke-linejoin="round"/>
<polygon points="1021.7,884.0 1017.9,897.7 1021.4,895.7 1024.7,883.6" fill="#3c4a5a" stroke="#8cb8f4" stroke-width="0.9" stroke-linejoin="round"/>
<polygon points="1017.9,897.7 1014.4,911.2 1018.2,907.6 1021.4,895.7" fill="#3c4a5a" stroke="#8cb8f4" stroke-width="0.9" stroke-linejoin="round"/>
<polygon points="1014.4,911.2 1011.2,924.4 1015.4,919.2 1018.2,907.6" fill="#3c4a5a" stroke="#8cb8f4" stroke-width="0.9" stroke-linejoin="round"/>
<polygon points="1011.2,924.4 1008.4,937.0 1013.0,930.3 1015.4,919.2" fill="#3c4a5a" stroke="#8cb8f4" stroke-width="0.9" stroke-linejoin="round"/>
<polygon points="1008.4,937.0 1006.0,949.1 1010.8,940.9 1013.0,930.3" fill="#3c4a5a" stroke="#8cb8f4" stroke-width="0.9" stroke-linejoin="round"/>
<polygon points="1006.0,949.1 1004.0,960.3 1009.1,950.9 1010.8,940.9" fill="#3c4a5a" stroke="#8cb8f4" stroke-width="0.9" stroke-linejoin="round"/>
<polygon points="1004.0,960.3 1002.5,970.7 1007.8,960.0 1009.1,950.9" fill="#3c4a5a" stroke="#8cb8f4" stroke-width="0.9" stroke-linejoin="round"/>
<polygon points="1002.5,970.7 1001.5,980.0 1006.8,968.3 1007.8,960.0" fill="#3c4a5a" stroke="#8cb8f4" stroke-width="0.9" stroke-linejoin="round"/>
<polygon points="1001.5,980.0 1000.9,988.3 1006.3,975.7 1006.8,968.3" fill="#3c4a5a" stroke="#8cb8f4" stroke-width="0.9" stroke-linejoin="round"/>
<polygon points="1000.9,988.3 1000.8,995.4 1006.1,982.0 1006.3,975.7" fill="#3c4a5a" stroke="#8cb8f4" stroke-width="0.9" stroke-linejoin="round"/>
<polygon points="1000.8,995.4 1001.1,1001.3 1006.4,987.3 1006.1,982.0" fill="#3c4a5a" stroke="#8cb8f4" stroke-width="0.9" stroke-linejoin="round"/>
<polygon points="1001.1,1001.3 1001.9,1005.9 1007.1,991.4 1006.4,987.3" fill="#3c4a5a" stroke="#8cb8f4" stroke-width="0.9" stroke-linejoin="round"/>
<polygon points="1001.9,1005.9 1003.1,1009.2 1008.1,994.5 1007.1,991.4" fill="#3c4a5a" stroke="#8cb8f4" stroke-width="0.9" stroke-linejoin="round"/>
<polygon points="1003.1,1009.2 1004.8,1011.2 1009.6,996.3 1008.1,994.5" fill="#3c4a5a" stroke="#8cb8f4" stroke-width="0.9" stroke-linejoin="round"/>
<polygon points="1004.8,1011.2 1006.8,1012.0 1011.3,997.1 1009.6,996.3" fill="#3c4a5a" stroke="#8cb8f4" stroke-width="0.9" stroke-linejoin="round"/>
<polygon points="1006.8,1012.0 1009.2,1011.5 1013.4,996.7 1011.3,997.1" fill="#3c4a5a" stroke="#8cb8f4" stroke-width="0.9" stroke-linejoin="round"/>
<polygon points="1009.2,1011.5 1011.9,1009.7 1015.8,995.2 1013.4,996.7" fill="#3c4a5a" stroke="#8cb8f4" stroke-width="0.9" stroke-linejoin="round"/>
<polygon points="1011.9,1009.7 1014.9,1006.7 1018.4,992.7 1015.8,995.2" fill="#3c4a5a" stroke="#8cb8f4" stroke-width="0.9" stroke-linejoin="round"/>
<polygon points="1014.9,1006.7 1018.1,1002.6 1021.3,989.1 1018.4,992.7" fill="#3c4a5a" stroke="#8cb8f4" stroke-width="0.9" stroke-linejoin="round"/>
<polygon points="1018.1,1002.6 1021.6,997.4 1024.4,984.5 1021.3,989.1" fill="#3c4a5a" stroke="#8cb8f4" stroke-width="0.9" stroke-linejoin="round"/>
<polygon points="1021.6,997.4 1025.3,991.2 1027.7,979.1 1024.4,984.5" fill="#3c4a5a" stroke="#8cb8f4" stroke-width="0.9" stroke-linejoin="round"/>
<polygon points="1025.3,991.2 1029.1,984.0 1031.1,972.7 1027.7,979.1" fill="#3c4a5a" stroke="#8cb8f4" stroke-width="0.9" stroke-linejoin="round"/>
<polygon points="1029.1,984.0 1033.1,975.9 1034.6,965.6 1031.1,972.7" fill="#3c4a5a" stroke="#8cb8f4" stroke-width="0.9" stroke-linejoin="round"/>
<polygon points="1033.1,975.9 1037.2,967.1 1038.2,957.7 1034.6,965.6" fill="#3c4a5a" stroke="#8cb8f4" stroke-width="0.9" stroke-linejoin="round"/>
<polygon points="1037.2,967.1 1041.3,957.5 1041.9,949.2 1038.2,957.7" fill="#3c4a5a" stroke="#8cb8f4" stroke-width="0.9" stroke-linejoin="round"/>
<polygon points="1041.3,957.5 1045.4,947.3 1045.5,940.2 1041.9,949.2" fill="#3c4a5a" stroke="#8cb8f4" stroke-width="0.9" stroke-linejoin="round"/>
<polygon points="1045.4,947.3 1049.5,936.6 1049.2,930.6 1045.5,940.2" fill="#3c4a5a" stroke="#8cb8f4" stroke-width="0.9" stroke-linejoin="round"/>
<polygon points="1049.5,936.6 1053.6,925.4 1052.8,920.7 1049.2,930.6" fill="#3c4a5a" stroke="#8cb8f4" stroke-width="0.9" stroke-linejoin="round"/>
<polygon points="1053.6,925.4 1057.5,913.9 1056.4,910.4 1052.8,920.7" fill="#3c4a5a" stroke="#8cb8f4" stroke-width="0.9" stroke-linejoin="round"/>
<polygon points="1057.5,913.9 1061.4,902.2 1059.9,899.9 1056.4,910.4" fill="#3c4a5a" stroke="#8cb8f4" stroke-width="0.9" stroke-linejoin="round"/>
<polygon points="1061.4,902.2 1065.1,890.2 1063.2,889.2 1059.9,899.9" fill="#3c4a5a" stroke="#8cb8f4" stroke-width="0.9" stroke-linejoin="round"/>
<polygon points="1065.1,890.2 1068.7,878.2 1066.4,878.5 1063.2,889.2" fill="#3c4a5a" stroke="#8cb8f4" stroke-width="0.9" stroke-linejoin="round"/>
<polygon points="1068.7,878.2 1072.1,866.3 1069.4,867.8 1066.4,878.5" fill="#3c4a5a" stroke="#8cb8f4" stroke-width="0.9" stroke-linejoin="round"/>
<polygon points="1072.1,866.3 1075.2,854.4 1072.2,857.2 1069.4,867.8" fill="#3c4a5a" stroke="#8cb8f4" stroke-width="0.9" stroke-linejoin="round"/>
<polygon points="1075.2,854.4 1078.1,842.7 1074.7,846.8 1072.2,857.2" fill="#3c4a5a" stroke="#8cb8f4" stroke-width="0.9" stroke-linejoin="round"/>
<polygon points="1078.1,842.7 1080.7,831.4 1077.1,836.7 1074.7,846.8" fill="#3c4a5a" stroke="#8cb8f4" stroke-width="0.9" stroke-linejoin="round"/>
<polygon points="1080.7,831.4 1083.0,820.4 1079.1,826.9 1077.1,836.7" fill="#3c4a5a" stroke="#8cb8f4" stroke-width="0.9" stroke-linejoin="round"/>
<polygon points="1083.0,820.4 1085.0,810.0 1080.9,817.6 1079.1,826.9" fill="#3c4a5a" stroke="#8cb8f4" stroke-width="0.9" stroke-linejoin="round"/>
<polygon points="1085.0,810.0 1086.7,800.1 1082.4,808.8 1080.9,817.6" fill="#3c4a5a" stroke="#8cb8f4" stroke-width="0.9" stroke-linejoin="round"/>
<polygon points="1086.7,800.1 1088.0,790.8 1083.5,800.6 1082.4,808.8" fill="#3c4a5a" stroke="#8cb8f4" stroke-width="0.9" stroke-linejoin="round"/>
<polygon points="1088.0,790.8 1089.0,782.3 1084.4,793.1 1083.5,800.6" fill="#3c4a5a" stroke="#8cb8f4" stroke-width="0.9" stroke-linejoin="round"/>
<polygon points="1089.0,782.3 1089.5,774.7 1084.9,786.3 1084.4,793.1" fill="#3c4a5a" stroke="#8cb8f4" stroke-width="0.9" stroke-linejoin="round"/>
<polygon points="1089.5,774.7 1089.7,767.9 1085.0,780.3 1084.9,786.3" fill="#3c4a5a" stroke="#8cb8f4" stroke-width="0.9" stroke-linejoin="round"/>
<polygon points="1089.7,767.9 1089.5,762.2 1084.8,775.3 1085.0,780.3" fill="#3c4a5a" stroke="#8cb8f4" stroke-width="0.9" stroke-linejoin="round"/>
<polygon points="1089.5,762.2 1088.8,757.4 1084.2,771.2 1084.8,775.3" fill="#3c4a5a" stroke="#8cb8f4" stroke-width="0.9" stroke-linejoin="round"/>
<polygon points="1088.8,757.4 1087.8,753.8 1083.2,768.0 1084.2,771.2" fill="#3c4a5a" stroke="#8cb8f4" stroke-width="0.9" stroke-linejoin="round"/>
<polygon points="1087.8,753.8 1086.3,751.4 1081.9,766.0 1083.2,768.0" fill="#3c4a5a" stroke="#8cb8f4" stroke-width="0.9" stroke-linejoin="round"/>
<polygon points="1086.3,751.4 1084.5,750.2 1080.2,765.0 1081.9,766.0" fill="#3c4a5a" stroke="#8cb8f4" stroke-width="0.9" stroke-linejoin="round"/>
<polygon points="1084.5,750.2 1082.3,750.2 1078.2,765.1 1080.2,765.0" fill="#3c4a5a" stroke="#8cb8f4" stroke-width="0.9" stroke-linejoin="round"/>
<polygon points="222.0,504.4 215.4,504.1 1079.6,751.5 1082.3,750.2" fill="#27313c" stroke="#8cb8f4" stroke-width="1.2" stroke-linejoin="round"/>
<polygon points="215.4,504.1 208.5,504.9 1076.7,754.1 1079.6,751.5" fill="#333f4d" stroke="#8cb8f4" stroke-width="1.2" stroke-linejoin="round"/>
<polygon points="208.5,504.9 201.5,506.7 1073.4,758.0 1076.7,754.1" fill="#3f4d5e" stroke="#8cb8f4" stroke-width="1.2" stroke-linejoin="round"/>
<polygon points="201.5,506.7 194.4,509.5 1069.8,763.2 1073.4,758.0" fill="#4a5a6f" stroke="#8cb8f4" stroke-width="1.2" stroke-linejoin="round"/>
<polygon points="194.4,509.5 187.2,513.4 1065.9,769.6 1069.8,763.2" fill="#54667e" stroke="#8cb8f4" stroke-width="1.2" stroke-linejoin="round"/>
<polygon points="187.2,513.4 180.1,518.2 1061.7,777.2 1065.9,769.6" fill="#5e728d" stroke="#8cb8f4" stroke-width="1.2" stroke-linejoin="round"/>
<polygon points="180.1,518.2 173.2,524.0 1057.4,785.9 1061.7,777.2" fill="#677d9a" stroke="#8cb8f4" stroke-width="1.2" stroke-linejoin="round"/>
<polygon points="173.2,524.0 166.4,530.7 1053.0,795.7 1057.4,785.9" fill="#6f86a6" stroke="#8cb8f4" stroke-width="1.2" stroke-linejoin="round"/>
<polygon points="166.4,530.7 159.9,538.3 1048.4,806.4 1053.0,795.7" fill="#768fb0" stroke="#8cb8f4" stroke-width="1.2" stroke-linejoin="round"/>
<polygon points="159.9,538.3 153.8,546.6 1043.8,818.0 1048.4,806.4" fill="#7c96b9" stroke="#8cb8f4" stroke-width="1.2" stroke-linejoin="round"/>
<polygon points="153.8,546.6 148.1,555.6 1039.1,830.3 1043.8,818.0" fill="#809cc0" stroke="#8cb8f4" stroke-width="1.2" stroke-linejoin="round"/>
<polygon points="148.1,555.6 142.9,565.1 1034.6,843.2 1039.1,830.3" fill="#d4b216" stroke="#ffd800" stroke-width="1.2" stroke-linejoin="round"/>
<polygon points="142.9,565.1 138.2,575.2 1030.1,856.6 1034.6,843.2" fill="#9cb8de" stroke="#8cb8f4" stroke-width="1.2" stroke-linejoin="round"/>
<polygon points="138.2,575.2 134.2,585.6 1025.8,870.2 1030.1,856.6" fill="#efffff" stroke="#8cb8f4" stroke-width="1.2" stroke-linejoin="round"/>
<polygon points="134.2,585.6 130.8,596.3 1021.7,884.0 1025.8,870.2" fill="#ffffff" stroke="#8cb8f4" stroke-width="1.2" stroke-linejoin="round"/>
<polygon points="130.8,596.3 128.1,607.1 1017.9,897.7 1021.7,884.0" fill="#b1cdf4" stroke="#8cb8f4" stroke-width="1.2" stroke-linejoin="round"/>
<polygon points="128.1,607.1 126.1,617.9 1014.4,911.2 1017.9,897.7" fill="#88a4ca" stroke="#8cb8f4" stroke-width="1.2" stroke-linejoin="round"/>
<polygon points="126.1,617.9 124.8,628.6 1011.2,924.4 1014.4,911.2" fill="#819cc1" stroke="#8cb8f4" stroke-width="1.2" stroke-linejoin="round"/>
<polygon points="124.8,628.6 124.3,639.1 1008.4,937.0 1011.2,924.4" fill="#7c97ba" stroke="#8cb8f4" stroke-width="1.2" stroke-linejoin="round"/>
<polygon points="124.3,639.1 124.6,649.3 1006.0,949.1 1008.4,937.0" fill="#7790b1" stroke="#8cb8f4" stroke-width="1.2" stroke-linejoin="round"/>
<polygon points="124.6,649.3 125.6,658.9 1004.0,960.3 1006.0,949.1" fill="#7088a7" stroke="#8cb8f4" stroke-width="1.2" stroke-linejoin="round"/>
<polygon points="125.6,658.9 127.4,668.1 1002.5,970.7 1004.0,960.3" fill="#687e9c" stroke="#8cb8f4" stroke-width="1.2" stroke-linejoin="round"/>
<polygon points="127.4,668.1 129.8,676.5 1001.5,980.0 1002.5,970.7" fill="#5f748f" stroke="#8cb8f4" stroke-width="1.2" stroke-linejoin="round"/>
<polygon points="129.8,676.5 132.9,684.3 1000.9,988.3 1001.5,980.0" fill="#556880" stroke="#8cb8f4" stroke-width="1.2" stroke-linejoin="round"/>
<polygon points="132.9,684.3 136.7,691.2 1000.8,995.4 1000.9,988.3" fill="#4b5c71" stroke="#8cb8f4" stroke-width="1.2" stroke-linejoin="round"/>
<polygon points="136.7,691.2 141.0,697.3 1001.1,1001.3 1000.8,995.4" fill="#404f61" stroke="#8cb8f4" stroke-width="1.2" stroke-linejoin="round"/>
<polygon points="141.0,697.3 145.8,702.4 1001.9,1005.9 1001.1,1001.3" fill="#354150" stroke="#8cb8f4" stroke-width="1.2" stroke-linejoin="round"/>
<polygon points="145.8,702.4 151.2,706.6 1003.1,1009.2 1001.9,1005.9" fill="#29333e" stroke="#8cb8f4" stroke-width="1.2" stroke-linejoin="round"/>
<polygon points="151.2,706.6 156.9,709.8 1004.8,1011.2 1003.1,1009.2" fill="#1d242c" stroke="#8cb8f4" stroke-width="1.2" stroke-linejoin="round"/>
<polygon points="156.9,709.8 163.0,711.9 1006.8,1012.0 1004.8,1011.2" fill="#10151a" stroke="#8cb8f4" stroke-width="1.2" stroke-linejoin="round"/>
<polygon points="228.3,505.6 222.0,504.4 1082.3,750.2 1084.5,750.2" fill="#1b2229" stroke="#8cb8f4" stroke-width="1.2" stroke-linejoin="round"/>
<polygon points="400.4,609.6 409.9,620.2 300.8,479.7 300.5,481.1" fill="#49596d" stroke="#8cb8f4" stroke-width="1.25" stroke-linejoin="round"/>
<polygon points="409.9,620.2 422.0,630.1 303.0,476.8 300.8,479.7" fill="#566982" stroke="#8cb8f4" stroke-width="1.25" stroke-linejoin="round"/>
<polygon points="422.0,630.1 435.7,638.3 307.1,472.6 303.0,476.8" fill="#617692" stroke="#8cb8f4" stroke-width="1.25" stroke-linejoin="round"/>
<polygon points="435.7,638.3 450.3,644.1 312.9,467.1 307.1,472.6" fill="#697f9d" stroke="#8cb8f4" stroke-width="1.25" stroke-linejoin="round"/>
<polygon points="450.3,644.1 465.1,647.3 320.4,460.6 312.9,467.1" fill="#6d84a3" stroke="#8cb8f4" stroke-width="1.25" stroke-linejoin="round"/>
<polygon points="465.1,647.3 479.6,647.7 329.1,453.3 320.4,460.6" fill="#6d84a3" stroke="#8cb8f4" stroke-width="1.25" stroke-linejoin="round"/>
<polygon points="479.6,647.7 493.4,645.6 338.7,445.6 329.1,453.3" fill="#69809d" stroke="#8cb8f4" stroke-width="1.25" stroke-linejoin="round"/>
<polygon points="493.4,645.6 506.3,641.6 348.8,437.8 338.7,445.6" fill="#627792" stroke="#8cb8f4" stroke-width="1.25" stroke-linejoin="round"/>
<polygon points="506.3,641.6 518.1,636.2 359.0,430.1 348.8,437.8" fill="#576a82" stroke="#8cb8f4" stroke-width="1.25" stroke-linejoin="round"/>
<polygon points="518.1,636.2 528.6,630.2 368.8,423.0 359.0,430.1" fill="#49596e" stroke="#8cb8f4" stroke-width="1.25" stroke-linejoin="round"/>
<polygon points="528.6,630.2 537.6,624.0 377.8,416.8 368.8,423.0" fill="#384555" stroke="#8cb8f4" stroke-width="1.25" stroke-linejoin="round"/>
<polygon points="537.6,624.0 544.9,618.1 385.7,411.5 377.8,416.8" fill="#26303a" stroke="#8cb8f4" stroke-width="1.25" stroke-linejoin="round"/>
<polygon points="544.9,618.1 550.2,612.8 392.2,407.6 385.7,411.5" fill="#13191e" stroke="#8cb8f4" stroke-width="1.25" stroke-linejoin="round"/>
<polygon points="550.2,612.8 553.4,608.3 397.0,405.1 392.2,407.6" fill="#13181d" stroke="#8cb8f4" stroke-width="1.25" stroke-linejoin="round"/>
<polygon points="553.4,608.3 554.1,604.4 399.9,404.1 397.0,405.1" fill="#262f3a" stroke="#8cb8f4" stroke-width="1.25" stroke-linejoin="round"/>
<polygon points="554.1,604.4 552.3,601.2 401.0,404.5 399.9,404.1" fill="#384555" stroke="#8cb8f4" stroke-width="1.25" stroke-linejoin="round"/>
<polygon points="696.5,640.2 682.4,636.4 846.7,529.6 854.5,538.7" fill="#7a4221" stroke="#f47220" stroke-width="1.25" stroke-linejoin="round"/>
<polygon points="682.4,636.4 668.9,633.0 838.2,521.9 846.7,529.6" fill="#55311b" stroke="#f47220" stroke-width="1.25" stroke-linejoin="round"/>
<polygon points="668.9,633.0 656.3,630.5 829.4,515.7 838.2,521.9" fill="#2e1e14" stroke="#f47220" stroke-width="1.25" stroke-linejoin="round"/>
<polygon points="656.3,630.5 644.6,629.0 820.5,511.4 829.4,515.7" fill="#191411" stroke="#f47220" stroke-width="1.25" stroke-linejoin="round"/>
<polygon points="644.6,629.0 634.1,628.8 812.0,509.0 820.5,511.4" fill="#412717" stroke="#f47220" stroke-width="1.25" stroke-linejoin="round"/>
<polygon points="634.1,628.8 624.8,630.0 804.1,508.8 812.0,509.0" fill="#67391e" stroke="#f47220" stroke-width="1.25" stroke-linejoin="round"/>
<polygon points="624.8,630.0 616.9,632.8 797.2,510.7 804.1,508.8" fill="#8a4a24" stroke="#f47220" stroke-width="1.25" stroke-linejoin="round"/>
<polygon points="752.8,686.2 759.7,680.7 869.3,615.1 863.9,619.7" fill="#a85829" stroke="#f47220" stroke-width="1.25" stroke-linejoin="round"/>
<polygon points="759.7,680.7 762.6,675.1 873.2,608.7 869.3,615.1" fill="#c1642d" stroke="#f47220" stroke-width="1.25" stroke-linejoin="round"/>
<polygon points="762.6,675.1 761.4,669.5 875.3,600.6 873.2,608.7" fill="#d26c30" stroke="#f47220" stroke-width="1.25" stroke-linejoin="round"/>
<polygon points="761.4,669.5 756.5,664.0 875.8,591.3 875.3,600.6" fill="#dc7131" stroke="#f47220" stroke-width="1.25" stroke-linejoin="round"/>
<polygon points="756.5,664.0 748.2,658.7 874.6,581.1 875.8,591.3" fill="#de7232" stroke="#f47220" stroke-width="1.25" stroke-linejoin="round"/>
<polygon points="748.2,658.7 737.3,653.7 871.7,570.3 874.6,581.1" fill="#d86f31" stroke="#f47220" stroke-width="1.25" stroke-linejoin="round"/>
<polygon points="737.3,653.7 724.6,649.0 867.2,559.4 871.7,570.3" fill="#cb682e" stroke="#f47220" stroke-width="1.25" stroke-linejoin="round"/>
<polygon points="724.6,649.0 710.7,644.5 861.5,548.7 867.2,559.4" fill="#b65f2b" stroke="#f47220" stroke-width="1.25" stroke-linejoin="round"/>
<polygon points="710.7,644.5 696.5,640.2 854.5,538.7 861.5,548.7" fill="#9b5226" stroke="#f47220" stroke-width="1.25" stroke-linejoin="round"/>
<line x1="681.1" y1="660.2" x2="1092.4" y2="398.2" stroke="#9cc0f4" stroke-width="1" stroke-dasharray="8 5 1.2 5"/>
<polygon points="857.5,535.4 848.7,525.2 846.7,529.6 854.5,538.7" fill="#2a1a12" stroke="#f47220" stroke-width="1.0" stroke-linejoin="round"/>
<polygon points="848.7,525.2 839.1,516.5 838.2,521.9 846.7,529.6" fill="#2a1a12" stroke="#f47220" stroke-width="1.0" stroke-linejoin="round"/>
<polygon points="839.1,516.5 829.2,509.6 829.4,515.7 838.2,521.9" fill="#2a1a12" stroke="#f47220" stroke-width="1.0" stroke-linejoin="round"/>
<polygon points="829.2,509.6 819.3,504.6 820.5,511.4 829.4,515.7" fill="#2a1a12" stroke="#f47220" stroke-width="1.0" stroke-linejoin="round"/>
<polygon points="819.3,504.6 809.7,502.0 812.0,509.0 820.5,511.4" fill="#2a1a12" stroke="#f47220" stroke-width="1.0" stroke-linejoin="round"/>
<polygon points="809.7,502.0 800.8,501.7 804.1,508.8 812.0,509.0" fill="#2a1a12" stroke="#f47220" stroke-width="1.0" stroke-linejoin="round"/>
<polygon points="800.8,501.7 793.0,503.8 797.2,510.7 804.1,508.8" fill="#2a1a12" stroke="#f47220" stroke-width="1.0" stroke-linejoin="round"/>
<polygon points="793.0,503.8 786.5,508.4 791.4,514.8 797.2,510.7" fill="#2a1a12" stroke="#f47220" stroke-width="1.0" stroke-linejoin="round"/>
<polygon points="786.5,508.4 781.6,515.1 787.1,520.8 791.4,514.8" fill="#2a1a12" stroke="#f47220" stroke-width="1.0" stroke-linejoin="round"/>
<polygon points="781.6,515.1 778.5,523.9 784.5,528.6 787.1,520.8" fill="#2a1a12" stroke="#f47220" stroke-width="1.0" stroke-linejoin="round"/>
<polygon points="778.5,523.9 777.5,534.4 783.6,537.9 784.5,528.6" fill="#2a1a12" stroke="#f47220" stroke-width="1.0" stroke-linejoin="round"/>
<polygon points="777.5,534.4 778.5,546.2 784.5,548.4 783.6,537.9" fill="#2a1a12" stroke="#f47220" stroke-width="1.0" stroke-linejoin="round"/>
<polygon points="778.5,546.2 781.6,558.8 787.3,559.5 784.5,548.4" fill="#2a1a12" stroke="#f47220" stroke-width="1.0" stroke-linejoin="round"/>
<polygon points="781.6,558.8 786.7,571.8 791.8,571.0 787.3,559.5" fill="#2a1a12" stroke="#f47220" stroke-width="1.0" stroke-linejoin="round"/>
<polygon points="786.7,571.8 793.5,584.5 797.8,582.3 791.8,571.0" fill="#2a1a12" stroke="#f47220" stroke-width="1.0" stroke-linejoin="round"/>
<polygon points="793.5,584.5 801.8,596.5 805.1,592.8 797.8,582.3" fill="#2a1a12" stroke="#f47220" stroke-width="1.0" stroke-linejoin="round"/>
<polygon points="801.8,596.5 811.2,607.2 813.4,602.3 805.1,592.8" fill="#2a1a12" stroke="#f47220" stroke-width="1.0" stroke-linejoin="round"/>
<polygon points="811.2,607.2 821.3,616.3 822.3,610.3 813.4,602.3" fill="#2a1a12" stroke="#f47220" stroke-width="1.0" stroke-linejoin="round"/>
<polygon points="821.3,616.3 831.7,623.2 831.6,616.5 822.3,610.3" fill="#2a1a12" stroke="#f47220" stroke-width="1.0" stroke-linejoin="round"/>
<polygon points="831.7,623.2 842.0,627.9 840.7,620.6 831.6,616.5" fill="#2a1a12" stroke="#f47220" stroke-width="1.0" stroke-linejoin="round"/>
<polygon points="842.0,627.9 851.8,630.0 849.4,622.6 840.7,620.6" fill="#2a1a12" stroke="#f47220" stroke-width="1.0" stroke-linejoin="round"/>
<polygon points="851.8,630.0 860.6,629.6 857.2,622.2 849.4,622.6" fill="#2a1a12" stroke="#f47220" stroke-width="1.0" stroke-linejoin="round"/>
<polygon points="860.6,629.6 868.2,626.7 863.9,619.7 857.2,622.2" fill="#2a1a12" stroke="#f47220" stroke-width="1.0" stroke-linejoin="round"/>
<polygon points="868.2,626.7 874.3,621.5 869.3,615.1 863.9,619.7" fill="#2a1a12" stroke="#f47220" stroke-width="1.0" stroke-linejoin="round"/>
<polygon points="874.3,621.5 878.6,614.2 873.2,608.7 869.3,615.1" fill="#2a1a12" stroke="#f47220" stroke-width="1.0" stroke-linejoin="round"/>
<polygon points="878.6,614.2 881.0,605.1 875.3,600.6 873.2,608.7" fill="#2a1a12" stroke="#f47220" stroke-width="1.0" stroke-linejoin="round"/>
<polygon points="881.0,605.1 881.5,594.6 875.8,591.3 875.3,600.6" fill="#2a1a12" stroke="#f47220" stroke-width="1.0" stroke-linejoin="round"/>
<polygon points="881.5,594.6 880.1,583.1 874.6,581.1 875.8,591.3" fill="#2a1a12" stroke="#f47220" stroke-width="1.0" stroke-linejoin="round"/>
<polygon points="880.1,583.1 876.8,571.0 871.7,570.3 874.6,581.1" fill="#2a1a12" stroke="#f47220" stroke-width="1.0" stroke-linejoin="round"/>
<polygon points="876.8,571.0 871.8,558.7 867.2,559.4 871.7,570.3" fill="#2a1a12" stroke="#f47220" stroke-width="1.0" stroke-linejoin="round"/>
<polygon points="871.8,558.7 865.3,546.7 861.5,548.7 867.2,559.4" fill="#2a1a12" stroke="#f47220" stroke-width="1.0" stroke-linejoin="round"/>
<polygon points="865.3,546.7 857.5,535.4 854.5,538.7 861.5,548.7" fill="#2a1a12" stroke="#f47220" stroke-width="1.0" stroke-linejoin="round"/>
<polygon points="608.5,629.7 601.5,634.6 786.5,508.4 793.0,503.8" fill="#a65728" stroke="#f47220" stroke-width="1.25" stroke-linejoin="round"/>
<polygon points="601.5,634.6 596.3,641.2 781.6,515.1 786.5,508.4" fill="#bf632c" stroke="#f47220" stroke-width="1.25" stroke-linejoin="round"/>
<polygon points="596.3,641.2 593.3,649.3 778.5,523.9 781.6,515.1" fill="#d16b2f" stroke="#f47220" stroke-width="1.25" stroke-linejoin="round"/>
<polygon points="593.3,649.3 592.8,658.4 777.5,534.4 778.5,523.9" fill="#dc7031" stroke="#f47220" stroke-width="1.25" stroke-linejoin="round"/>
<polygon points="592.8,658.4 595.0,668.2 778.5,546.2 777.5,534.4" fill="#de7232" stroke="#f47220" stroke-width="1.25" stroke-linejoin="round"/>
<polygon points="595.0,668.2 600.3,677.9 781.6,558.8 778.5,546.2" fill="#d96f31" stroke="#f47220" stroke-width="1.25" stroke-linejoin="round"/>
<polygon points="600.3,677.9 608.9,687.0 786.7,571.8 781.6,558.8" fill="#cc692f" stroke="#f47220" stroke-width="1.25" stroke-linejoin="round"/>
<polygon points="608.9,687.0 620.8,694.9 793.5,584.5 786.7,571.8" fill="#b8602b" stroke="#f47220" stroke-width="1.25" stroke-linejoin="round"/>
<polygon points="620.8,694.9 635.9,701.0 801.8,596.5 793.5,584.5" fill="#9d5327" stroke="#f47220" stroke-width="1.25" stroke-linejoin="round"/>
<polygon points="635.9,701.0 653.8,705.0 811.2,607.2 801.8,596.5" fill="#7d4321" stroke="#f47220" stroke-width="1.25" stroke-linejoin="round"/>
<polygon points="653.8,705.0 673.6,706.8 821.3,616.3 811.2,607.2" fill="#59321b" stroke="#f47220" stroke-width="1.25" stroke-linejoin="round"/>
<polygon points="673.6,706.8 694.4,706.5 831.7,623.2 821.3,616.3" fill="#321f15" stroke="#f47220" stroke-width="1.25" stroke-linejoin="round"/>
<polygon points="694.4,706.5 714.8,704.3 842.0,627.9 831.7,623.2" fill="#151210" stroke="#f47220" stroke-width="1.25" stroke-linejoin="round"/>
<polygon points="714.8,704.3 733.5,700.5 851.8,630.0 842.0,627.9" fill="#3d2517" stroke="#f47220" stroke-width="1.25" stroke-linejoin="round"/>
<polygon points="733.5,700.5 749.5,695.6 860.6,629.6 851.8,630.0" fill="#64371d" stroke="#f47220" stroke-width="1.25" stroke-linejoin="round"/>
<polygon points="749.5,695.6 761.8,689.8 868.2,626.7 860.6,629.6" fill="#874823" stroke="#f47220" stroke-width="1.25" stroke-linejoin="round"/></svg>
<!-- MODEL END -->

<!-- 3D LABELS -->
<div class="a" style="left:376px;top:534px;width:22px;height:18px;background:#fff;font-size:12px;line-height:18px;text-align:center;color:#000">D2</div>
<div class="a" style="left:719px;top:631px;width:22px;height:18px;background:#fff;font-size:12px;line-height:18px;text-align:center;color:#000">D1</div>
<div class="a" style="left:284px;top:696px;width:22px;height:18px;background:#fff;font-size:12px;line-height:18px;text-align:center;color:#000">CH</div>
<!-- NAV CUBE -->
<svg class="a" style="left:1005px;top:205px" width="100" height="85" viewBox="1005 205 100 85">
<path fill-rule="evenodd" fill="#bdbdbd" d="M1012.7 262.4a41.1 22.2 0 1 0 82.2 0a41.1 22.2 0 1 0 -82.2 0ZM1021.7 262.4a32.1 15.5 0 1 1 64.2 0a32.1 15.5 0 1 1 -64.2 0Z"/>
<path d="M1025.1 226.2L1047.9 214L1080.5 220.7L1063.2 236.1Z" fill="#5e5e5e" stroke="#111" stroke-width="1.3" stroke-linejoin="round"/>
<path d="M1025.1 226.2L1063.2 236.1L1061.3 272.7L1028.6 260.1Z" fill="#444" stroke="#111" stroke-width="1.3" stroke-linejoin="round"/>
<path d="M1063.2 236.1L1080.5 220.7L1077.8 252.2L1061.3 272.7Z" fill="#4c4c4c" stroke="#111" stroke-width="1.3" stroke-linejoin="round"/>
<path d="M1048 217V244L1030 258M1048 244L1077 251" stroke="#777" stroke-width="0.6" fill="none"/>
<text x="1040" y="253" font-family="Liberation Sans" font-size="7" fill="#fff">+Y</text>
<path d="M1050 224l4 2M1055 226l3-1" stroke="#fff" stroke-width="1.2"/>
<path d="M1071 245l-2 4M1072 241l-2 3" stroke="#fff" stroke-width="1.2"/>
<path d="M1016 245.5H1025M1021 241L1023 248" stroke="#222" stroke-width="1.4" fill="none"/>
<path d="M1085 266L1096 269" stroke="#222" stroke-width="1.2" stroke-dasharray="2 1"/><circle cx="1096" cy="270" r="1.2" fill="#222"/>
<path d="M1023 283L1033 274M1030 273L1030 279L1038 275" stroke="#222" stroke-width="1.8" fill="none"/>
</svg>
<!-- TREE -->
<svg class="a" style="left:996px;top:308px" width="10" height="100"><path d="M1 7.5L7 2V7.5Z" fill="#333"/><path d="M1 95.5L7 90V95.5Z" fill="#333"/></svg>
<div class="a" style="left:1020px;top:305px;font-size:13px;line-height:14px;font-weight:bold;color:#333;letter-spacing:-0.2px">Members</div>
<div class="a" style="left:1020px;top:393px;font-size:13px;line-height:14px;font-weight:bold;color:#333;letter-spacing:-0.3px">Load effects</div>
<div class="a" style="left:1020px;top:437px;font-size:13px;line-height:14px;font-weight:bold;color:#333;letter-spacing:-0.3px">Operations</div>
<div class="a" style="left:1010px;top:411px;width:75px;height:21px;background:#f06a2d"></div>
<svg class="a" style="left:1084px;top:411px" width="15" height="21"><path d="M0 0H1L14.5 10.5L1 21H0Z" fill="#f06a2d"/></svg>
<div class="a" style="left:1047px;top:415px;font-size:12px;line-height:14px;font-weight:bold;color:#fff;letter-spacing:-0.3px">LE1</div>
<div class="a" style="left:1047px;top:327px;font-size:12px;line-height:14px;color:#333;text-decoration:underline">CH</div>
<div class="a" style="left:1047px;top:349px;font-size:12px;line-height:14px;color:#333">D1</div>
<div class="a" style="left:1047px;top:371px;font-size:12px;line-height:14px;color:#333">D2</div>
<svg class="a" style="left:1018px;top:324px" width="16" height="110">
<g fill="#e2e2e2"><rect x="2.3" y="4.6" width="10.6" height="10.2" rx="1.5"/><rect x="2.3" y="26.6" width="10.6" height="10.2" rx="1.5"/><rect x="2.3" y="48.6" width="10.6" height="10.2" rx="1.5"/><rect x="2.3" y="92.6" width="10.6" height="10.2" rx="1.5"/></g>
<g fill="none" stroke="#f57d16" stroke-width="2" stroke-linecap="round"><path d="M4 9.5L6.5 13L12.5 3M4 31.5L6.5 35L12.5 25M4 53.5L6.5 57L12.5 47M4 97.5L6.5 101L12.5 91"/></g>
</svg>

<!-- INFO TEXT -->
<div class="a" style="left:6px;top:1031px;font-size:11.5px;line-height:14px;color:#222">CH-Arc 23: Cross-section HSS(ICHS)6.625X0.375, Material A36, Thickness 3/8" in</div>
<!-- CONTEXT MENU -->
<div class="a" style="left:897px;top:787px;width:308px;height:170px;background:rgba(0,0,0,0.25);filter:blur(2px)"></div>
<div class="a" style="left:894px;top:784px;width:308px;height:170px;background:#f5f5f5;border:1px solid #a0a0a0"></div>
<div class="a" style="left:898px;top:787px;width:300px;height:22px;background:#c5dff0;border:1px solid #3c9ee0"></div>
<div class="a" style="left:925px;top:788px;width:1px;height:164px;background:#dcdcdc"></div>
<div class="a" style="left:934px;top:788px;width:164px;height:20px;background:#e4e4e4"></div>
<div class="a" style="left:940.5px;top:791px;font-size:11px;line-height:14px;color:#111">1 - HSS(ICHS)6.625X0.375</div>
<svg class="a" style="left:1085px;top:795px" width="9" height="6"><path d="M0.5 0.5H8L4.25 5.5Z" fill="#111"/></svg>
<div class="a" style="left:1101px;top:788px;width:21px;height:20px;background:#a3a3a3"></div>
<svg class="a" style="left:1101px;top:788px" width="21" height="20"><path d="M6 18L8 13L15 4L18 7L11 15Z" fill="#e8e8e8"/></svg>
<div class="a" style="left:1126px;top:788px;width:22px;height:20px;background:#6f6f6f"></div>
<svg class="a" style="left:1126px;top:788px" width="22" height="20"><path d="M11 3.5V16.5M4.5 10H17.5" stroke="#fff" stroke-width="3"/></svg>
<div class="a" style="left:933.5px;top:814px;font-size:12px;line-height:14px;font-weight:bold;color:#111;letter-spacing:-0.2px">Member CH</div>
<div class="a" style="left:928px;top:833px;width:270px;height:1px;background:#d0d0d0"></div>
<div class="a" style="left:933.5px;top:841px;font-size:11.5px;line-height:14px;color:#111">Connect to...</div>
<div class="a" style="left:933.5px;top:863px;font-size:11.5px;line-height:14px;color:#111">Anchor</div>
<div class="a" style="left:933.5px;top:885px;font-size:11.5px;line-height:14px;color:#111">Modify...</div>
<div class="a" style="left:933.5px;top:907px;font-size:11.5px;line-height:14px;color:#111">Clean</div>
<div class="a" style="left:928px;top:926px;width:270px;height:1px;background:#d0d0d0"></div>
<div class="a" style="left:933.5px;top:934px;font-size:11.5px;line-height:14px;color:#111">Set bearing</div>
<!-- TOOLTIP -->
<div class="a" style="left:1146px;top:815px;width:56px;height:25px;background:#fff;border:1px solid #c8c8c8"></div>
<div class="a" style="left:1151px;top:821px;font-size:11.5px;line-height:14px;color:#555">Add new</div>
<!-- RED HIGHLIGHT -->
<div class="a" style="left:1112px;top:774px;width:50px;height:51px;border:4px solid #e8141c;border-radius:9px"></div>
<!-- VIEWPORT TOOLBAR -->
<svg class="a" style="left:0;top:155px" width="260" height="26" viewBox="0 155 260 26">
<g fill="none" stroke="#fff" stroke-width="2">
<path d="M19.5 169.5L28 161L36.5 169.5M21.5 168V178H25.5V172H30.5V178H34.5V168"/>
<rect x="55.5" y="160.5" width="13" height="11" stroke="#ddd" stroke-width="1.2"/>
<circle cx="68" cy="170.5" r="4.5" stroke-width="1.6"/><path d="M71 174L75 178M68 168V171H66" stroke-width="1.4"/>
<circle cx="99.5" cy="168.5" r="7.2" stroke-width="2.2"/><path d="M104.5 173.5L110 179" stroke-width="2.6"/>
<path d="M137 160V178M128 169H146" stroke-width="2"/>
<path d="M179 165A7.3 7.3 0 1 0 180.3 170" stroke-width="2.2"/>
<path d="M198.5 161.5L202 165M216 161.5L212.5 165M198.5 178.5L202 175M216 178.5L212.5 175" stroke-width="1.5"/>
</g>
<g fill="#fff">
<path d="M133 162.5L137 158.5L141 162.5ZM133 175.5L137 179.5L141 175.5ZM130.5 165L126.5 169L130.5 173ZM143.5 165L147.5 169L143.5 173Z"/>
<path d="M181.5 162L182 169.5L175.5 167Z"/>
<path d="M198 161H202.5V162.5H199.5V165.5H198ZM216.5 161H212V162.5H215V165.5H216.5ZM198 179H202.5V177.5H199.5V174.5H198ZM216.5 179H212V177.5H215V174.5H216.5Z"/>
</g>
<path d="M232 168L246 163.5L252 165L252.5 169.5L238 176.5L233 176Z" fill="#f07023"/>
<path d="M238 170.5L252 165M238 170.5L238 176.5M238 170.5L232 168" stroke="#d55a10" stroke-width="0.7" fill="none"/>
</svg>
<div class="a" style="left:923px;top:162px;font-size:12px;line-height:14px;color:#fff;font-weight:bold;letter-spacing:-0.5px">Solid</div>
<div class="a" style="left:963.5px;top:162px;font-size:11.4px;line-height:14px;color:#fff">Transparent</div>
<div class="a" style="left:1042.5px;top:162px;font-size:11.8px;line-height:14px;color:#fff">Wireframe</div>
<!-- RIGHT PANEL HEADER -->
<div class="a" style="left:1130.5px;top:162px;font-size:12px;line-height:14px;color:#fff;font-weight:bold;letter-spacing:-0.3px">LE1</div>
<div class="a" style="left:1159.5px;top:162px;font-size:12px;line-height:14px;color:#fff">[Load]</div>
<div class="a" style="left:1773px;top:162px;font-size:12px;line-height:14px;color:#fff;font-weight:bold;letter-spacing:-0.5px">Copy</div>
<div class="a" style="left:1810.5px;top:162px;font-size:12px;line-height:14px;color:#fff;font-weight:bold">Delete</div>

<!-- RIGHT PANEL TABLE -->
<div class="a" style="left:1140px;top:200px;width:356px;height:94px;border:2px solid #acacac;background:#fff"></div>
<div class="a" style="left:1142px;top:202px;width:352px;height:32px;background:#f2f2f2"></div>
<div class="a" style="left:1142px;top:235px;width:352px;height:28px;background:#e4e4e4"></div>
<svg class="a" style="left:1140px;top:200px" width="356" height="94" viewBox="1140 200 356 94">
<g stroke="#b4b4b4" stroke-width="1"><path d="M1169.5 202V292M1229.5 202V292M1270.5 202V292M1307.5 202V292M1344.5 202V292M1394.5 202V292M1444.5 202V292M1142 234.5H1494M1142 263.5H1494"/></g>
<rect x="1170.5" y="235.5" width="58" height="27" fill="none" stroke="#f07023" stroke-width="1.6"/>
<path d="M1152 244.5L1157 249L1152 253.5" fill="none" stroke="#333" stroke-width="1.3"/>
</svg>
<div class="a" style="left:1174px;top:212px;font-size:12px;line-height:14px;font-weight:bold;color:#333;letter-spacing:-0.3px">Member</div>
<div class="a" style="left:1234px;top:205px;font-size:11.5px;line-height:15px;font-weight:bold;color:#333;letter-spacing:-0.3px">N<br>[kip]</div>
<div class="a" style="left:1275px;top:205px;font-size:11.5px;line-height:15px;font-weight:bold;color:#333;letter-spacing:-0.3px">Vy<br>[kip]</div>
<div class="a" style="left:1312px;top:205px;font-size:11.5px;line-height:15px;font-weight:bold;color:#333;letter-spacing:-0.3px">Vz<br>[kip]</div>
<div class="a" style="left:1349px;top:205px;font-size:11.5px;line-height:15px;font-weight:bold;color:#333;letter-spacing:-0.3px">Mx<br>[kip.in]</div>
<div class="a" style="left:1399px;top:205px;font-size:11.5px;line-height:15px;font-weight:bold;color:#333;letter-spacing:-0.3px">My<br>[kip.in]</div>
<div class="a" style="left:1449px;top:205px;font-size:11.5px;line-height:15px;font-weight:bold;color:#333;letter-spacing:-0.3px">Mz<br>[kip.in]</div>
<div class="a" style="left:1174px;top:243px;font-size:11.5px;line-height:14px;color:#333">D1 / End</div>
<div class="a" style="left:1234px;top:243px;font-size:11.5px;line-height:14px;color:#333;letter-spacing:-0.2px">0.000</div>
<div class="a" style="left:1275px;top:243px;font-size:11.5px;line-height:14px;color:#333;letter-spacing:-0.2px">0.000</div>
<div class="a" style="left:1312px;top:243px;font-size:11.5px;line-height:14px;color:#333;letter-spacing:-0.2px">0.000</div>
<div class="a" style="left:1349px;top:243px;font-size:11.5px;line-height:14px;color:#333;letter-spacing:-0.2px">0.00</div>
<div class="a" style="left:1399px;top:243px;font-size:11.5px;line-height:14px;color:#333;letter-spacing:-0.2px">0.00</div>
<div class="a" style="left:1449px;top:243px;font-size:11.5px;line-height:14px;color:#333;letter-spacing:-0.2px">0.00</div>
<div class="a" style="left:1174px;top:272px;font-size:11.5px;line-height:14px;color:#333">D2 / End</div>
<div class="a" style="left:1234px;top:272px;font-size:11.5px;line-height:14px;color:#333;letter-spacing:-0.2px">0.000</div>
<div class="a" style="left:1275px;top:272px;font-size:11.5px;line-height:14px;color:#333;letter-spacing:-0.2px">0.000</div>
<div class="a" style="left:1312px;top:272px;font-size:11.5px;line-height:14px;color:#333;letter-spacing:-0.2px">0.000</div>
<div class="a" style="left:1349px;top:272px;font-size:11.5px;line-height:14px;color:#333;letter-spacing:-0.2px">0.00</div>
<div class="a" style="left:1399px;top:272px;font-size:11.5px;line-height:14px;color:#333;letter-spacing:-0.2px">0.00</div>
<div class="a" style="left:1449px;top:272px;font-size:11.5px;line-height:14px;color:#333;letter-spacing:-0.2px">0.00</div>
<div class="a" style="left:1140px;top:316px;font-size:11.6px;line-height:15px;color:#333;white-space:normal;width:360px">Values in disabled cells are not taken into account in CBFEM<br>analysis. Members can be loaded only by that components of<br>internal forces which are defined in member "Model type".</div>
<!-- STATUS -->
<div class="a" style="left:0;top:1048px;width:1857px;height:32px;background:#141414"></div><svg class="a" style="left:0;top:1048px" width="1857" height="32"><path d="M1744 30.6h192" stroke="rgb(60,60,60)" stroke-opacity="0.20" stroke-width="0.8"/><path d="M1145 23.6h381" stroke="rgb(93,93,93)" stroke-opacity="0.16" stroke-width="0.6"/><path d="M42 18.6h473" stroke="rgb(80,80,80)" stroke-opacity="0.33" stroke-width="1"/><path d="M660 17.4h351" stroke="rgb(57,57,57)" stroke-opacity="0.35" stroke-width="1"/><path d="M387 14.9h435" stroke="rgb(88,88,88)" stroke-opacity="0.15" stroke-width="0.8"/><path d="M-249 7.6h394" stroke="rgb(63,63,63)" stroke-opacity="0.24" stroke-width="1"/><path d="M1155 32.0h286" stroke="rgb(83,83,83)" stroke-opacity="0.33" stroke-width="1"/><path d="M463 25.3h886" stroke="rgb(83,83,83)" stroke-opacity="0.15" stroke-width="1.2"/><path d="M695 22.9h548" stroke="rgb(86,86,86)" stroke-opacity="0.18" stroke-width="1.2"/><path d="M1494 16.0h415" stroke="rgb(84,84,84)" stroke-opacity="0.36" stroke-width="1.2"/><path d="M1266 11.2h568" stroke="rgb(84,84,84)" stroke-opacity="0.24" stroke-width="0.8"/><path d="M1457 30.1h776" stroke="rgb(94,94,94)" stroke-opacity="0.18" stroke-width="1.2"/><path d="M1765 9.9h680" stroke="rgb(87,87,87)" stroke-opacity="0.26" stroke-width="1.2"/><path d="M148 10.0h534" stroke="rgb(98,98,98)" stroke-opacity="0.28" stroke-width="0.6"/><path d="M437 25.1h156" stroke="rgb(107,107,107)" stroke-opacity="0.16" stroke-width="0.6"/><path d="M1108 1.9h355" stroke="rgb(69,69,69)" stroke-opacity="0.29" stroke-width="0.6"/><path d="M-6 24.1h349" stroke="rgb(107,107,107)" stroke-opacity="0.16" stroke-width="0.6"/><path d="M1246 13.5h174" stroke="rgb(78,78,78)" stroke-opacity="0.20" stroke-width="0.8"/><path d="M-121 21.5h866" stroke="rgb(56,56,56)" stroke-opacity="0.12" stroke-width="0.6"/><path d="M-24 11.9h852" stroke="rgb(102,102,102)" stroke-opacity="0.15" stroke-width="0.6"/><path d="M-207 12.3h893" stroke="rgb(64,64,64)" stroke-opacity="0.38" stroke-width="0.6"/><path d="M1027 11.0h707" stroke="rgb(62,62,62)" stroke-opacity="0.18" stroke-width="1.2"/><path d="M668 1.0h724" stroke="rgb(102,102,102)" stroke-opacity="0.12" stroke-width="1"/><path d="M1560 24.2h679" stroke="rgb(85,85,85)" stroke-opacity="0.37" stroke-width="0.6"/><path d="M382 21.1h227" stroke="rgb(83,83,83)" stroke-opacity="0.33" stroke-width="0.8"/><path d="M1385 16.6h515" stroke="rgb(75,75,75)" stroke-opacity="0.15" stroke-width="1"/><path d="M1007 8.3h465" stroke="rgb(56,56,56)" stroke-opacity="0.30" stroke-width="0.8"/><path d="M246 21.5h249" stroke="rgb(65,65,65)" stroke-opacity="0.13" stroke-width="0.8"/><path d="M1821 16.3h851" stroke="rgb(70,70,70)" stroke-opacity="0.17" stroke-width="1.2"/><path d="M-127 2.4h321" stroke="rgb(105,105,105)" stroke-opacity="0.33" stroke-width="1"/><path d="M612 8.2h545" stroke="rgb(55,55,55)" stroke-opacity="0.15" stroke-width="1.2"/><path d="M-60 13.1h693" stroke="rgb(70,70,70)" stroke-opacity="0.13" stroke-width="0.6"/><path d="M199 5.8h313" stroke="rgb(88,88,88)" stroke-opacity="0.29" stroke-width="1.2"/><path d="M1084 9.9h309" stroke="rgb(103,103,103)" stroke-opacity="0.38" stroke-width="1.2"/><path d="M-254 13.6h594" stroke="rgb(81,81,81)" stroke-opacity="0.36" stroke-width="0.8"/><path d="M1131 29.5h510" stroke="rgb(56,56,56)" stroke-opacity="0.25" stroke-width="0.6"/><path d="M325 19.5h888" stroke="rgb(78,78,78)" stroke-opacity="0.19" stroke-width="1.2"/><path d="M360 3.2h780" stroke="rgb(98,98,98)" stroke-opacity="0.34" stroke-width="1.2"/><path d="M1075 1.9h498" stroke="rgb(92,92,92)" stroke-opacity="0.28" stroke-width="0.6"/><path d="M504 9.1h851" stroke="rgb(59,59,59)" stroke-opacity="0.17" stroke-width="1.2"/><path d="M933 6.2h444" stroke="rgb(84,84,84)" stroke-opacity="0.15" stroke-width="1"/><path d="M-37 12.6h241" stroke="rgb(60,60,60)" stroke-opacity="0.28" stroke-width="1"/><path d="M1770 20.5h669" stroke="rgb(56,56,56)" stroke-opacity="0.28" stroke-width="1.2"/><path d="M1261 24.9h523" stroke="rgb(77,77,77)" stroke-opacity="0.37" stroke-width="0.8"/><path d="M280 25.6h545" stroke="rgb(85,85,85)" stroke-opacity="0.31" stroke-width="1.2"/><path d="M1503 29.8h373" stroke="rgb(69,69,69)" stroke-opacity="0.15" stroke-width="1"/><path d="M1200 17.6h674" stroke="rgb(60,60,60)" stroke-opacity="0.27" stroke-width="0.6"/><path d="M80 2.3h559" stroke="rgb(106,106,106)" stroke-opacity="0.22" stroke-width="0.6"/><path d="M1666 25.6h661" stroke="rgb(106,106,106)" stroke-opacity="0.29" stroke-width="0.8"/><path d="M543 31.2h681" stroke="rgb(98,98,98)" stroke-opacity="0.20" stroke-width="0.8"/><path d="M-58 16.8h556" stroke="rgb(103,103,103)" stroke-opacity="0.22" stroke-width="1"/><path d="M1243 16.5h343" stroke="rgb(65,65,65)" stroke-opacity="0.23" stroke-width="0.8"/><path d="M1847 12.9h737" stroke="rgb(91,91,91)" stroke-opacity="0.31" stroke-width="1.2"/><path d="M-237 14.1h596" stroke="rgb(102,102,102)" stroke-opacity="0.15" stroke-width="0.6"/><path d="M573 15.4h683" stroke="rgb(81,81,81)" stroke-opacity="0.30" stroke-width="1.2"/><path d="M881 11.5h685" stroke="rgb(97,97,97)" stroke-opacity="0.13" stroke-width="0.8"/><path d="M105 17.1h762" stroke="rgb(79,79,79)" stroke-opacity="0.38" stroke-width="0.6"/><path d="M829 10.0h830" stroke="rgb(84,84,84)" stroke-opacity="0.29" stroke-width="0.6"/><path d="M1735 0.5h697" stroke="rgb(93,93,93)" stroke-opacity="0.21" stroke-width="0.8"/><path d="M-83 28.3h762" stroke="rgb(104,104,104)" stroke-opacity="0.33" stroke-width="1"/><path d="M964 23.8h294" stroke="rgb(106,106,106)" stroke-opacity="0.27" stroke-width="0.6"/><path d="M637 19.6h340" stroke="rgb(91,91,91)" stroke-opacity="0.15" stroke-width="0.8"/><path d="M1340 31.1h413" stroke="rgb(86,86,86)" stroke-opacity="0.25" stroke-width="0.6"/><path d="M746 24.1h656" stroke="rgb(76,76,76)" stroke-opacity="0.23" stroke-width="1.2"/><path d="M-128 0.9h715" stroke="rgb(66,66,66)" stroke-opacity="0.32" stroke-width="1.2"/><path d="M1048 8.2h775" stroke="rgb(101,101,101)" stroke-opacity="0.14" stroke-width="0.8"/><path d="M1840 16.0h657" stroke="rgb(64,64,64)" stroke-opacity="0.10" stroke-width="1.2"/><path d="M490 30.9h553" stroke="rgb(79,79,79)" stroke-opacity="0.27" stroke-width="0.8"/><path d="M365 27.9h637" stroke="rgb(85,85,85)" stroke-opacity="0.30" stroke-width="1"/><path d="M1478 2.5h378" stroke="rgb(96,96,96)" stroke-opacity="0.37" stroke-width="1"/><path d="M548 20.9h781" stroke="rgb(60,60,60)" stroke-opacity="0.24" stroke-width="0.8"/><path d="M844 12.5h788" stroke="rgb(106,106,106)" stroke-opacity="0.24" stroke-width="0.6"/><path d="M202 9.9h493" stroke="rgb(69,69,69)" stroke-opacity="0.25" stroke-width="0.6"/><path d="M-58 30.6h764" stroke="rgb(79,79,79)" stroke-opacity="0.34" stroke-width="0.8"/><path d="M-133 10.2h493" stroke="rgb(65,65,65)" stroke-opacity="0.24" stroke-width="1"/><path d="M-11 14.8h689" stroke="rgb(95,95,95)" stroke-opacity="0.17" stroke-width="1"/><path d="M-85 10.4h328" stroke="rgb(67,67,67)" stroke-opacity="0.32" stroke-width="1"/><path d="M3 5.9h252" stroke="rgb(72,72,72)" stroke-opacity="0.33" stroke-width="1.2"/><path d="M1476 12.8h407" stroke="rgb(101,101,101)" stroke-opacity="0.36" stroke-width="1"/><path d="M1320 23.8h802" stroke="rgb(95,95,95)" stroke-opacity="0.32" stroke-width="1"/><path d="M1074 17.0h205" stroke="rgb(74,74,74)" stroke-opacity="0.22" stroke-width="0.8"/><path d="M1644 8.3h481" stroke="rgb(60,60,60)" stroke-opacity="0.36" stroke-width="0.8"/><path d="M518 10.1h876" stroke="rgb(61,61,61)" stroke-opacity="0.20" stroke-width="1"/><path d="M1595 2.5h699" stroke="rgb(96,96,96)" stroke-opacity="0.22" stroke-width="1"/><path d="M1498 7.6h442" stroke="rgb(73,73,73)" stroke-opacity="0.24" stroke-width="0.8"/><path d="M136 11.5h524" stroke="rgb(64,64,64)" stroke-opacity="0.32" stroke-width="1"/><path d="M607 8.0h338" stroke="rgb(76,76,76)" stroke-opacity="0.16" stroke-width="0.8"/><path d="M-199 23.3h855" stroke="rgb(96,96,96)" stroke-opacity="0.32" stroke-width="0.6"/><path d="M83 27.6h197" stroke="rgb(83,83,83)" stroke-opacity="0.32" stroke-width="0.8"/><path d="M944 10.3h237" stroke="rgb(96,96,96)" stroke-opacity="0.32" stroke-width="1.2"/><path d="M-183 7.3h725" stroke="rgb(86,86,86)" stroke-opacity="0.28" stroke-width="1"/><path d="M1041 17.4h218" stroke="rgb(87,87,87)" stroke-opacity="0.26" stroke-width="1.2"/><path d="M1514 31.6h491" stroke="rgb(81,81,81)" stroke-opacity="0.21" stroke-width="1.2"/><path d="M-66 1.5h896" stroke="rgb(63,63,63)" stroke-opacity="0.14" stroke-width="0.8"/><path d="M360 2.5h748" stroke="rgb(55,55,55)" stroke-opacity="0.17" stroke-width="1"/><path d="M-246 7.1h470" stroke="rgb(60,60,60)" stroke-opacity="0.20" stroke-width="1.2"/><path d="M1639 1.6h331" stroke="rgb(85,85,85)" stroke-opacity="0.15" stroke-width="0.6"/><path d="M783 4.4h195" stroke="rgb(67,67,67)" stroke-opacity="0.26" stroke-width="0.6"/><path d="M828 26.3h661" stroke="rgb(70,70,70)" stroke-opacity="0.15" stroke-width="1.2"/><path d="M865 0.0h335" stroke="rgb(84,84,84)" stroke-opacity="0.16" stroke-width="0.6"/><path d="M1051 19.7h403" stroke="rgb(96,96,96)" stroke-opacity="0.34" stroke-width="0.8"/><path d="M1497 16.4h264" stroke="rgb(68,68,68)" stroke-opacity="0.15" stroke-width="0.8"/><path d="M629 9.5h471" stroke="rgb(80,80,80)" stroke-opacity="0.20" stroke-width="1"/><path d="M913 26.0h505" stroke="rgb(73,73,73)" stroke-opacity="0.25" stroke-width="1.2"/><path d="M194 31.6h677" stroke="rgb(99,99,99)" stroke-opacity="0.26" stroke-width="0.6"/><path d="M890 1.0h302" stroke="rgb(67,67,67)" stroke-opacity="0.22" stroke-width="0.6"/><path d="M1049 20.6h707" stroke="rgb(99,99,99)" stroke-opacity="0.31" stroke-width="0.6"/><path d="M1558 23.6h318" stroke="rgb(64,64,64)" stroke-opacity="0.27" stroke-width="0.6"/><path d="M1851 22.0h255" stroke="rgb(99,99,99)" stroke-opacity="0.26" stroke-width="0.8"/><path d="M-101 24.4h665" stroke="rgb(110,110,110)" stroke-opacity="0.24" stroke-width="1"/><path d="M40 30.8h393" stroke="rgb(107,107,107)" stroke-opacity="0.18" stroke-width="0.6"/><path d="M596 13.2h690" stroke="rgb(84,84,84)" stroke-opacity="0.19" stroke-width="0.6"/><path d="M1284 20.4h858" stroke="rgb(56,56,56)" stroke-opacity="0.17" stroke-width="1"/><path d="M1270 8.4h595" stroke="rgb(102,102,102)" stroke-opacity="0.36" stroke-width="0.8"/><path d="M-22 13.8h278" stroke="rgb(110,110,110)" stroke-opacity="0.23" stroke-width="1.2"/><path d="M526 31.1h610" stroke="rgb(94,94,94)" stroke-opacity="0.16" stroke-width="1.2"/><path d="M1329 14.2h788" stroke="rgb(76,76,76)" stroke-opacity="0.19" stroke-width="0.8"/><path d="M1051 11.8h504" stroke="rgb(104,104,104)" stroke-opacity="0.28" stroke-width="0.8"/><path d="M364 21.8h305" stroke="rgb(108,108,108)" stroke-opacity="0.34" stroke-width="0.6"/><path d="M1578 0.4h298" stroke="rgb(75,75,75)" stroke-opacity="0.12" stroke-width="1"/><path d="M1133 25.4h767" stroke="rgb(59,59,59)" stroke-opacity="0.22" stroke-width="0.6"/><path d="M939 9.0h309" stroke="rgb(65,65,65)" stroke-opacity="0.27" stroke-width="1.2"/><path d="M1066 23.1h485" stroke="rgb(72,72,72)" stroke-opacity="0.29" stroke-width="1.2"/><path d="M1401 15.3h328" stroke="rgb(91,91,91)" stroke-opacity="0.19" stroke-width="0.8"/><path d="M1218 6.5h806" stroke="rgb(92,92,92)" stroke-opacity="0.28" stroke-width="1.2"/><path d="M206 16.8h310" stroke="rgb(58,58,58)" stroke-opacity="0.17" stroke-width="0.8"/><path d="M1040 4.4h443" stroke="rgb(82,82,82)" stroke-opacity="0.14" stroke-width="1.2"/><path d="M724 12.5h435" stroke="rgb(68,68,68)" stroke-opacity="0.17" stroke-width="0.6"/><path d="M1463 17.0h218" stroke="rgb(89,89,89)" stroke-opacity="0.29" stroke-width="0.6"/><path d="M629 12.4h324" stroke="rgb(72,72,72)" stroke-opacity="0.13" stroke-width="1"/><path d="M1388 16.6h586" stroke="rgb(100,100,100)" stroke-opacity="0.23" stroke-width="0.8"/><path d="M-237 8.9h181" stroke="rgb(96,96,96)" stroke-opacity="0.15" stroke-width="1"/><path d="M-195 7.7h259" stroke="rgb(73,73,73)" stroke-opacity="0.37" stroke-width="0.6"/><path d="M867 20.5h659" stroke="rgb(63,63,63)" stroke-opacity="0.22" stroke-width="0.8"/><path d="M803 1.1h351" stroke="rgb(58,58,58)" stroke-opacity="0.37" stroke-width="1"/><path d="M1180 24.4h223" stroke="rgb(78,78,78)" stroke-opacity="0.13" stroke-width="1"/><path d="M1744 11.6h627" stroke="rgb(106,106,106)" stroke-opacity="0.24" stroke-width="1"/><path d="M1786 16.3h169" stroke="rgb(76,76,76)" stroke-opacity="0.22" stroke-width="0.6"/><path d="M1803 11.2h551" stroke="rgb(58,58,58)" stroke-opacity="0.34" stroke-width="0.6"/><path d="M793 22.1h728" stroke="rgb(82,82,82)" stroke-opacity="0.22" stroke-width="0.8"/><path d="M-203 5.2h595" stroke="rgb(101,101,101)" stroke-opacity="0.34" stroke-width="0.8"/><path d="M1651 9.4h180" stroke="rgb(70,70,70)" stroke-opacity="0.27" stroke-width="0.8"/><path d="M1661 12.9h233" stroke="rgb(93,93,93)" stroke-opacity="0.36" stroke-width="0.8"/><path d="M110 7.5h155" stroke="rgb(80,80,80)" stroke-opacity="0.13" stroke-width="1"/><path d="M177 18.6h544" stroke="rgb(88,88,88)" stroke-opacity="0.36" stroke-width="1.2"/><path d="M-27 29.3h470" stroke="rgb(84,84,84)" stroke-opacity="0.31" stroke-width="0.6"/><path d="M933 31.2h537" stroke="rgb(83,83,83)" stroke-opacity="0.37" stroke-width="1.2"/><path d="M982 5.2h246" stroke="rgb(77,77,77)" stroke-opacity="0.15" stroke-width="1"/><path d="M1808 22.6h628" stroke="rgb(91,91,91)" stroke-opacity="0.28" stroke-width="1.2"/><path d="M106 15.0h477" stroke="rgb(104,104,104)" stroke-opacity="0.17" stroke-width="0.6"/></svg>

<div class="a" style="left:23.5px;top:1059px;font-size:11.5px;line-height:14px;font-weight:bold;color:#8a8a8a;letter-spacing:-0.4px">Design code:</div>
<div class="a" style="left:99px;top:1059px;font-size:11.5px;line-height:14px;font-weight:bold;color:#fff;letter-spacing:-0.4px">AISC - LRFD</div>
<div class="a" style="left:184.5px;top:1059px;font-size:11.5px;line-height:14px;font-weight:bold;color:#8a8a8a;letter-spacing:-0.4px">Analysis:</div>
<div class="a" style="left:235.5px;top:1059px;font-size:11.5px;line-height:14px;font-weight:bold;color:#fff;letter-spacing:-0.4px">Stress, strain</div>
<div class="a" style="left:327px;top:1059px;font-size:11.5px;line-height:14px;font-weight:bold;color:#8a8a8a;letter-spacing:-0.4px">Load effects:</div>
<div class="a" style="left:404px;top:1059px;font-size:11.5px;line-height:14px;font-weight:bold;color:#fff;letter-spacing:-0.3px">Equilibrium not required</div>
<div class="a" style="left:559px;top:1059px;font-size:11.5px;line-height:14px;font-weight:bold;color:#8a8a8a;letter-spacing:-0.3px">Units:</div>
<div class="a" style="left:598.5px;top:1059px;font-size:11.5px;line-height:14px;font-weight:bold;color:#fff">in</div>
<div class="a" style="left:1733.5px;top:1059px;font-size:12px;line-height:14px;color:#fff"><span style="color:#f07023">www.</span>ideastatica<span style="color:#f07023">.com</span></div>
</body></html>
